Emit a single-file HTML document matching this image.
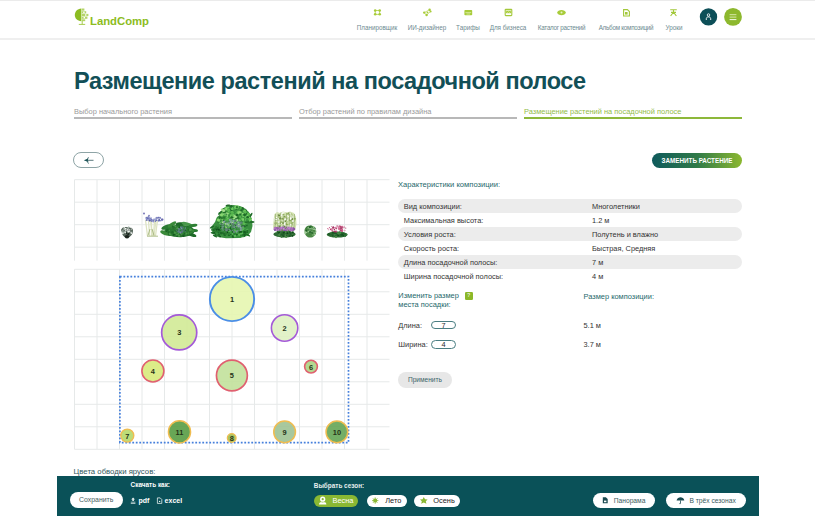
<!DOCTYPE html>
<html><head><meta charset="utf-8">
<style>
*{margin:0;padding:0;box-sizing:border-box}
html,body{width:815px;height:516px;overflow:hidden;background:#fff;font-family:"Liberation Sans",sans-serif;color:#333}
.abs{position:absolute}
#topline{left:0;top:0;width:815px;height:1.4px;background:#ebebeb}
#hdrline{left:0;top:38px;width:815px;height:1.5px;background:#efefef}
.nav{position:absolute;top:23.5px;font-size:6.3px;color:#6d8a90;white-space:nowrap;text-align:center}
.navi{position:absolute;top:8px}
#title{left:74px;top:67.9px;font-size:23.5px;line-height:normal;font-weight:bold;color:#124f57;white-space:nowrap;letter-spacing:-0.44px}
.tab{position:absolute;top:106.6px;font-size:7.45px;color:#9a9a9a;white-space:nowrap}
.tabl{position:absolute;top:117px;height:1.8px;background:#b8b8b8}
.row{position:absolute;left:398px;width:344px;height:14px;border-radius:7px;font-size:7.4px;color:#333}
.row.g{background:#ececec}
.row span{position:absolute;top:3.4px}
.row span.a{left:5.8px}
.row span.b{left:194px}
.lbl{position:absolute;font-size:8px;color:#1e686b;white-space:nowrap}
.txt{position:absolute;font-size:7.4px;color:#333;white-space:nowrap}
.bw{position:absolute;color:#fff;font-size:6.4px;font-weight:bold;white-space:nowrap}
.pill{height:12.4px;border-radius:6.2px;font-size:7.4px;line-height:12.6px;white-space:nowrap}
.btn2{height:15.4px;border-radius:7.7px;background:#fff;color:#3a5a60;font-size:6.7px;line-height:15.6px;white-space:nowrap}
</style></head><body>
<div id="topline" class="abs"></div>
<div id="hdrline" class="abs"></div>

<!-- logo -->
<svg class="abs" style="left:0;top:0" width="160" height="30">
  <path d="M81.4 8.4 C77.3 8.6 74.8 11.6 74.8 15 C74.8 18.4 77.3 21 81.4 21.2 Z" fill="#8cbc22"/>
  <g fill="#b4d468">
    <rect x="81.8" y="8.5" width="2.6" height="2.2"/>
    <rect x="81.8" y="11.2" width="4.4" height="2.2"/>
    <rect x="81.8" y="13.9" width="6.6" height="2.2"/>
    <rect x="81.8" y="16.6" width="5.6" height="2.2"/>
    <rect x="81.8" y="19.3" width="3.4" height="1.9"/>
  </g>
  <g fill="#fff">
    <rect x="83.2" y="11.6" width="1.4" height="1.4"/><rect x="85" y="14.3" width="1.4" height="1.4"/><rect x="83.6" y="17" width="1.4" height="1.4"/>
  </g>
  <path d="M82.2 21 V24.4 M78.8 24.4 H85.2" stroke="#a8cc50" stroke-width="1"/>
  <text x="90" y="24.7" font-family="Liberation Sans" font-weight="bold" font-size="11.3" fill="#8cbc22">LandComp</text>
</svg>

<!-- nav -->
<div class="nav" style="left:337px;width:80px">Планировщик</div>
<div class="nav" style="left:387px;width:80px">ИИ-дизайнер</div>
<div class="nav" style="left:428px;width:80px">Тарифы</div>
<div class="nav" style="left:468px;width:80px">Для бизнеса</div>
<div class="nav" style="left:521.5px;width:80px;letter-spacing:-0.27px">Каталог растений</div>
<div class="nav" style="left:586px;width:80px;letter-spacing:-0.25px">Альбом композиций</div>
<div class="nav" style="left:634px;width:80px">Уроки</div>
<svg class="abs" style="left:0;top:0" width="815" height="38">
 <g fill="none" stroke="#b0d048" stroke-width="0.8">
  <rect x="375.2" y="10.5" width="4.5" height="3.8"/>
 </g>
 <g fill="#a8cc3a">
  <circle cx="375.2" cy="10.5" r="1.3"/><circle cx="379.7" cy="10.5" r="1.3"/><circle cx="375.2" cy="14.3" r="1.3"/><circle cx="379.7" cy="14.3" r="1.3"/>
 </g>
 <g fill="none" stroke="#b8d458" stroke-width="0.7">
  <path d="M429.5 9.8 L424.2 12.6 L426.6 15 L430.6 11.4 Z"/>
 </g>
 <g fill="#a8cc3a">
  <circle cx="429.6" cy="9.8" r="1.2"/><circle cx="424.2" cy="12.6" r="1.2"/><circle cx="426.6" cy="15" r="1.2"/><circle cx="430.6" cy="11.6" r="1"/><circle cx="427.5" cy="12.4" r="0.9"/>
 </g>
 <g fill="none" stroke="#a3c83a" stroke-width="1.1">
  <rect x="505.2" y="9.4" width="6.6" height="6.2" rx="0.6"/>
  <path d="M623.6 9.6 H627.4 L629.4 11.6 V16 H623.6 Z"/>
  <path d="M670.2 9.8 H676.8 M673.5 9.8 V12.2 M670.6 16 L673.5 12.2 L676.4 16 M671 12.4 H676"/>
 </g>
 <rect x="464.4" y="10" width="7.8" height="5.2" rx="0.8" fill="#a8cc3a"/>
 <path d="M465.4 12.6 H471.2 M466.5 14 H470" stroke="#e4f0b8" stroke-width="0.7"/>
 <rect x="505.8" y="10.6" width="5.4" height="2.6" fill="#a8cc3a"/><path d="M506.6 11.6 L507.4 12.6 L508.5 11.6 L509.6 12.6 L510.4 11.6" stroke="#e8f2c8" stroke-width="0.5" fill="none"/>
 <path d="M557.2 12.6 C557.6 9.1 565.4 9.1 565.8 12.6 C565.4 16.1 557.6 16.1 557.2 12.6 Z" fill="#a8cc3a"/><circle cx="561.5" cy="12.6" r="1" fill="#e8f2c8"/>
 <g fill="#a3c83a"><circle cx="0" cy="0" r="0"/><rect x="625" y="12" width="2.6" height="2.6"/></g>
 <circle cx="708.5" cy="16.9" r="8.7" fill="#0d4f58"/>
 <path d="M706.3 20 V18.7 C706.3 17.4 707.3 16.9 708.5 16.9 C709.7 16.9 710.7 17.4 710.7 18.7 V20" fill="none" stroke="#fff" stroke-width="0.9"/><circle cx="708.5" cy="15" r="1.25" fill="none" stroke="#fff" stroke-width="0.8"/>
 <circle cx="733" cy="16.9" r="8.9" fill="#8db82e"/>
 <path d="M729.6 14.7 H736.4 M729.6 17.1 H736.4" stroke="#dfeeb8" stroke-width="0.9"/><path d="M729.6 19.6 H736.4" stroke="#fff" stroke-width="0.9"/>
</svg>

<div id="title" class="abs">Размещение растений на посадочной полосе</div>

<div class="tab" style="left:74px">Выбор начального растения</div>
<div class="tabl" style="left:74px;width:218px"></div>
<div class="tab" style="left:299px">Отбор растений по правилам дизайна</div>
<div class="tabl" style="left:299px;width:218px"></div>
<div class="tab" style="left:524px;color:#92bb48">Размещение растений на посадочной полосе</div>
<div class="tabl" style="left:524px;width:218px;background:#8db83a"></div>

<!-- back button -->
<div class="abs" style="left:73.3px;top:152.3px;width:31.2px;height:16.2px;border:0.8px solid #8ea4a6;border-radius:8px"></div>
<svg class="abs" style="left:0;top:0" width="120" height="175"><path d="M86 160.3 H93.5" stroke="#4a6a6e" stroke-width="0.9"/><path d="M83.8 160.3 L88.5 158.6 L87.6 160.3 L88.5 162 Z" fill="#0d4a4e"/><path d="M88.5 157.2 L86.6 160.3 L88.5 163.6" stroke="#2a5a5e" stroke-width="0.8" fill="none"/></svg>

<!-- replace button -->
<div class="abs" style="left:652px;top:153px;width:90px;height:15px;border-radius:8px;background:linear-gradient(90deg,#0f5a5c,#2f7a48 50%,#8cb830);color:#fff;font-size:6.3px;font-weight:bold;text-align:center;line-height:15.4px">ЗАМЕНИТЬ РАСТЕНИЕ</div>

<!-- grids -->
<svg class="abs" style="left:0;top:0" width="815" height="516" id="grids"><line x1="74.5" y1="179.7" x2="74.5" y2="260.7" stroke="#e6e9e9" stroke-width="1"/>
<line x1="97.0" y1="179.7" x2="97.0" y2="260.7" stroke="#e6e9e9" stroke-width="1"/>
<line x1="119.5" y1="179.7" x2="119.5" y2="260.7" stroke="#e6e9e9" stroke-width="1"/>
<line x1="142.0" y1="179.7" x2="142.0" y2="260.7" stroke="#e6e9e9" stroke-width="1"/>
<line x1="164.5" y1="179.7" x2="164.5" y2="260.7" stroke="#e6e9e9" stroke-width="1"/>
<line x1="187.0" y1="179.7" x2="187.0" y2="260.7" stroke="#e6e9e9" stroke-width="1"/>
<line x1="209.5" y1="179.7" x2="209.5" y2="260.7" stroke="#e6e9e9" stroke-width="1"/>
<line x1="232.0" y1="179.7" x2="232.0" y2="260.7" stroke="#e6e9e9" stroke-width="1"/>
<line x1="254.5" y1="179.7" x2="254.5" y2="260.7" stroke="#e6e9e9" stroke-width="1"/>
<line x1="277.0" y1="179.7" x2="277.0" y2="260.7" stroke="#e6e9e9" stroke-width="1"/>
<line x1="299.5" y1="179.7" x2="299.5" y2="260.7" stroke="#e6e9e9" stroke-width="1"/>
<line x1="322.0" y1="179.7" x2="322.0" y2="260.7" stroke="#e6e9e9" stroke-width="1"/>
<line x1="344.5" y1="179.7" x2="344.5" y2="260.7" stroke="#e6e9e9" stroke-width="1"/>
<line x1="367.0" y1="179.7" x2="367.0" y2="260.7" stroke="#e6e9e9" stroke-width="1"/>
<line x1="74.5" y1="179.7" x2="389.5" y2="179.7" stroke="#e6e9e9" stroke-width="1"/>
<line x1="74.5" y1="202.2" x2="389.5" y2="202.2" stroke="#e6e9e9" stroke-width="1"/>
<line x1="74.5" y1="224.7" x2="389.5" y2="224.7" stroke="#e6e9e9" stroke-width="1"/>
<line x1="74.5" y1="247.2" x2="389.5" y2="247.2" stroke="#e6e9e9" stroke-width="1"/>
<line x1="74.5" y1="269.3" x2="74.5" y2="449.3" stroke="#e6e9e9" stroke-width="1"/>
<line x1="97.0" y1="269.3" x2="97.0" y2="449.3" stroke="#e6e9e9" stroke-width="1"/>
<line x1="119.5" y1="269.3" x2="119.5" y2="449.3" stroke="#e6e9e9" stroke-width="1"/>
<line x1="142.0" y1="269.3" x2="142.0" y2="449.3" stroke="#e6e9e9" stroke-width="1"/>
<line x1="164.5" y1="269.3" x2="164.5" y2="449.3" stroke="#e6e9e9" stroke-width="1"/>
<line x1="187.0" y1="269.3" x2="187.0" y2="449.3" stroke="#e6e9e9" stroke-width="1"/>
<line x1="209.5" y1="269.3" x2="209.5" y2="449.3" stroke="#e6e9e9" stroke-width="1"/>
<line x1="232.0" y1="269.3" x2="232.0" y2="449.3" stroke="#e6e9e9" stroke-width="1"/>
<line x1="254.5" y1="269.3" x2="254.5" y2="449.3" stroke="#e6e9e9" stroke-width="1"/>
<line x1="277.0" y1="269.3" x2="277.0" y2="449.3" stroke="#e6e9e9" stroke-width="1"/>
<line x1="299.5" y1="269.3" x2="299.5" y2="449.3" stroke="#e6e9e9" stroke-width="1"/>
<line x1="322.0" y1="269.3" x2="322.0" y2="449.3" stroke="#e6e9e9" stroke-width="1"/>
<line x1="344.5" y1="269.3" x2="344.5" y2="449.3" stroke="#e6e9e9" stroke-width="1"/>
<line x1="367.0" y1="269.3" x2="367.0" y2="449.3" stroke="#e6e9e9" stroke-width="1"/>
<line x1="74.5" y1="269.3" x2="389.5" y2="269.3" stroke="#e6e9e9" stroke-width="1"/>
<line x1="74.5" y1="291.8" x2="389.5" y2="291.8" stroke="#e6e9e9" stroke-width="1"/>
<line x1="74.5" y1="314.3" x2="389.5" y2="314.3" stroke="#e6e9e9" stroke-width="1"/>
<line x1="74.5" y1="336.8" x2="389.5" y2="336.8" stroke="#e6e9e9" stroke-width="1"/>
<line x1="74.5" y1="359.3" x2="389.5" y2="359.3" stroke="#e6e9e9" stroke-width="1"/>
<line x1="74.5" y1="381.8" x2="389.5" y2="381.8" stroke="#e6e9e9" stroke-width="1"/>
<line x1="74.5" y1="404.3" x2="389.5" y2="404.3" stroke="#e6e9e9" stroke-width="1"/>
<line x1="74.5" y1="426.8" x2="389.5" y2="426.8" stroke="#e6e9e9" stroke-width="1"/>
<line x1="74.5" y1="449.3" x2="389.5" y2="449.3" stroke="#e6e9e9" stroke-width="1"/>
<rect x="119.9" y="276.6" width="228.6" height="166" fill="none" stroke="#4680dc" stroke-width="1.7" stroke-dasharray="1.8 1.7"/>
<circle cx="232.0" cy="299.0" r="22.150000000000002" fill="#e5f6ae" fill-opacity="0.88" stroke="#4a8ee6" stroke-width="1.9"/>
<text x="232.0" y="301.9" text-anchor="middle" font-family="Liberation Sans" font-weight="bold" font-size="7.4" fill="#263318">1</text>
<circle cx="179.2" cy="332.4" r="17.549999999999997" fill="#d0e993" fill-opacity="0.88" stroke="#a45ad8" stroke-width="1.7"/>
<text x="179.2" y="335.29999999999995" text-anchor="middle" font-family="Liberation Sans" font-weight="bold" font-size="7.4" fill="#263318">3</text>
<circle cx="284.6" cy="328.0" r="13.2" fill="#def0c0" fill-opacity="0.88" stroke="#a45ad8" stroke-width="1.6"/>
<text x="284.6" y="330.9" text-anchor="middle" font-family="Liberation Sans" font-weight="bold" font-size="7.4" fill="#263318">2</text>
<circle cx="152.9" cy="371.0" r="11.0" fill="#d7e978" fill-opacity="0.88" stroke="#e06070" stroke-width="1.6"/>
<text x="152.9" y="373.9" text-anchor="middle" font-family="Liberation Sans" font-weight="bold" font-size="7.4" fill="#263318">4</text>
<circle cx="231.9" cy="375.5" r="15.450000000000001" fill="#c0e098" fill-opacity="0.88" stroke="#e06070" stroke-width="1.7"/>
<text x="231.9" y="378.4" text-anchor="middle" font-family="Liberation Sans" font-weight="bold" font-size="7.4" fill="#263318">5</text>
<circle cx="311.0" cy="366.6" r="6.4" fill="#aad381" fill-opacity="0.88" stroke="#e06070" stroke-width="1.6"/>
<text x="311.0" y="369.5" text-anchor="middle" font-family="Liberation Sans" font-weight="bold" font-size="7.4" fill="#263318">6</text>
<circle cx="127.3" cy="435.6" r="6.5" fill="#b3d766" fill-opacity="0.88" stroke="#f0bc50" stroke-width="1.4"/>
<text x="127.3" y="438.5" text-anchor="middle" font-family="Liberation Sans" font-weight="bold" font-size="7.4" fill="#263318">7</text>
<circle cx="179.5" cy="431.9" r="11.05" fill="#539a3f" fill-opacity="0.88" stroke="#f0bc50" stroke-width="1.5"/>
<text x="179.5" y="434.79999999999995" text-anchor="middle" font-family="Liberation Sans" font-weight="bold" font-size="7.4" fill="#263318">11</text>
<circle cx="231.7" cy="438.0" r="4.35" fill="#9cbc4a" fill-opacity="0.88" stroke="#f0bc50" stroke-width="1.3"/>
<text x="231.7" y="440.9" text-anchor="middle" font-family="Liberation Sans" font-weight="bold" font-size="7.4" fill="#263318">8</text>
<circle cx="284.6" cy="431.9" r="10.85" fill="#9cc091" fill-opacity="0.88" stroke="#f0bc50" stroke-width="1.5"/>
<text x="284.6" y="434.79999999999995" text-anchor="middle" font-family="Liberation Sans" font-weight="bold" font-size="7.4" fill="#263318">9</text>
<circle cx="336.9" cy="431.9" r="10.85" fill="#61a351" fill-opacity="0.88" stroke="#f0bc50" stroke-width="1.5"/>
<text x="336.9" y="434.79999999999995" text-anchor="middle" font-family="Liberation Sans" font-weight="bold" font-size="7.4" fill="#263318">10</text><path d="M121.5 231 C121 227.5 124 226.8 127 227 C130.5 226.8 133.2 228 133 231 C133 234 131 236 129.5 237 L128 238.5 L126 238.5 L124.5 237 C122.5 235.5 121.8 233.5 121.5 231 Z" fill="#56645a"/>
<circle cx="126.1" cy="232.5" r="0.79" fill="#6a7a70"/>
<circle cx="127.7" cy="229.8" r="0.75" fill="#8a9a90"/>
<circle cx="130.5" cy="231.6" r="0.44" fill="#6a7a70"/>
<circle cx="125.8" cy="230.7" r="0.74" fill="#8a9a90"/>
<circle cx="124.2" cy="228.7" r="0.44" fill="#b0bcb4"/>
<circle cx="129.4" cy="231.6" r="0.73" fill="#d8e0d8"/>
<circle cx="126.5" cy="232.5" r="0.47" fill="#2a3a30"/>
<circle cx="122.9" cy="229.7" r="0.46" fill="#8a9a90"/>
<circle cx="124.2" cy="233.2" r="0.44" fill="#1e2a22"/>
<circle cx="124.2" cy="229.0" r="0.72" fill="#f0f4f0"/>
<circle cx="121.9" cy="231.9" r="0.62" fill="#8a9a90"/>
<circle cx="128.2" cy="227.6" r="0.55" fill="#2a3a30"/>
<circle cx="122.0" cy="230.4" r="0.84" fill="#2a3a30"/>
<circle cx="125.9" cy="230.3" r="0.71" fill="#d8e0d8"/>
<circle cx="127.1" cy="229.4" r="0.69" fill="#1e2a22"/>
<circle cx="128.5" cy="230.7" r="0.73" fill="#f0f4f0"/>
<circle cx="125.3" cy="233.1" r="0.70" fill="#f8faf8"/>
<circle cx="128.5" cy="231.5" r="0.56" fill="#6a7a70"/>
<circle cx="131.2" cy="232.3" r="0.79" fill="#f8faf8"/>
<circle cx="126.3" cy="233.5" r="0.80" fill="#1e2a22"/>
<circle cx="130.0" cy="230.1" r="0.77" fill="#f8faf8"/>
<circle cx="131.4" cy="232.3" r="0.48" fill="#8a9a90"/>
<circle cx="122.9" cy="233.4" r="0.70" fill="#d8e0d8"/>
<circle cx="123.2" cy="232.0" r="0.93" fill="#b0bcb4"/>
<circle cx="128.9" cy="229.3" r="0.65" fill="#f0f4f0"/>
<circle cx="125.6" cy="228.6" r="0.54" fill="#6a7a70"/>
<circle cx="128.2" cy="232.8" r="0.54" fill="#f8faf8"/>
<circle cx="128.1" cy="229.4" r="0.57" fill="#d8e0d8"/>
<circle cx="124.1" cy="232.2" r="0.74" fill="#d8e0d8"/>
<circle cx="125.6" cy="228.2" r="0.77" fill="#1e2a22"/>
<circle cx="122.1" cy="232.1" r="0.97" fill="#b0bcb4"/>
<circle cx="124.3" cy="232.6" r="0.69" fill="#b0bcb4"/>
<circle cx="128.3" cy="231.4" r="0.53" fill="#d8e0d8"/>
<circle cx="130.2" cy="233.1" r="0.46" fill="#d8e0d8"/>
<circle cx="121.9" cy="230.1" r="0.77" fill="#6a7a70"/>
<circle cx="130.0" cy="228.7" r="0.49" fill="#2a3a30"/>
<circle cx="131.0" cy="230.1" r="0.68" fill="#6a7a70"/>
<circle cx="130.1" cy="227.6" r="0.68" fill="#f8faf8"/>
<circle cx="126.2" cy="232.5" r="0.85" fill="#2a3a30"/>
<circle cx="122.5" cy="231.5" r="0.71" fill="#8a9a90"/>
<circle cx="130.7" cy="230.1" r="0.49" fill="#1e2a22"/>
<circle cx="127.2" cy="228.7" r="0.79" fill="#6a7a70"/>
<circle cx="126.1" cy="229.0" r="0.62" fill="#d8e0d8"/>
<circle cx="125.4" cy="232.6" r="0.72" fill="#f0f4f0"/>
<circle cx="124.2" cy="228.5" r="0.87" fill="#8a9a90"/>
<circle cx="128.7" cy="227.4" r="0.84" fill="#8a9a90"/>
<circle cx="128.2" cy="233.8" r="0.84" fill="#1e2a22"/>
<circle cx="127.9" cy="228.2" r="0.52" fill="#f0f4f0"/>
<circle cx="122.1" cy="232.3" r="0.99" fill="#f0f4f0"/>
<circle cx="128.5" cy="231.7" r="0.68" fill="#f0f4f0"/>
<circle cx="128.2" cy="234.2" r="0.94" fill="#1e2a22"/>
<circle cx="122.7" cy="231.4" r="0.88" fill="#6a7a70"/>
<circle cx="127.9" cy="229.7" r="0.63" fill="#8a9a90"/>
<circle cx="124.7" cy="231.2" r="0.87" fill="#f0f4f0"/>
<circle cx="131.5" cy="233.1" r="0.83" fill="#f8faf8"/>
<circle cx="122.7" cy="233.4" r="0.83" fill="#d8e0d8"/>
<circle cx="127.9" cy="231.0" r="0.75" fill="#f8faf8"/>
<circle cx="127.7" cy="229.5" r="0.90" fill="#f8faf8"/>
<circle cx="125.2" cy="228.9" r="0.73" fill="#d8e0d8"/>
<circle cx="131.8" cy="231.5" r="0.84" fill="#6a7a70"/>
<circle cx="121.9" cy="230.3" r="0.66" fill="#8a9a90"/>
<circle cx="128.1" cy="229.3" r="0.55" fill="#2a3a30"/>
<circle cx="122.3" cy="231.0" r="0.60" fill="#b0bcb4"/>
<circle cx="127.7" cy="230.1" r="0.84" fill="#f8faf8"/>
<circle cx="124.5" cy="227.8" r="0.71" fill="#d8e0d8"/>
<circle cx="123.2" cy="230.4" r="0.41" fill="#f8faf8"/>
<circle cx="127.7" cy="227.8" r="0.87" fill="#d8e0d8"/>
<circle cx="128.7" cy="233.6" r="0.84" fill="#1e2a22"/>
<circle cx="125.2" cy="233.7" r="0.73" fill="#6a7a70"/>
<circle cx="128.0" cy="230.3" r="0.51" fill="#1e2a22"/>
<circle cx="127.5" cy="228.0" r="0.74" fill="#6a7a70"/>
<circle cx="123.0" cy="232.1" r="0.70" fill="#8a9a90"/>
<circle cx="125.7" cy="228.4" r="0.72" fill="#f8faf8"/>
<circle cx="124.3" cy="230.9" r="0.71" fill="#2a3a30"/>
<circle cx="131.5" cy="229.1" r="0.52" fill="#f8faf8"/>
<ellipse cx="127" cy="236.6" rx="2.2" ry="1.5" fill="#1a221c"/>
<path d="M147.5 236 L145.5 220" stroke="#dde3c2" stroke-width="1.3"/>
<path d="M149.5 236 L148.5 220" stroke="#dde3c2" stroke-width="1.3"/>
<path d="M151.5 236 L151.5 220" stroke="#dde3c2" stroke-width="1.3"/>
<path d="M153.5 236 L154.5 220" stroke="#dde3c2" stroke-width="1.3"/>
<path d="M155.5 236 L157.5 220" stroke="#dde3c2" stroke-width="1.3"/>
<path d="M152.5 236 L150.5 220" stroke="#dde3c2" stroke-width="1.3"/>
<path d="M154 236 L156 220" stroke="#dde3c2" stroke-width="1.3"/>
<path d="M148 235.5 L150 229 M154 235.5 L152 229" stroke="#9aae70" stroke-width="0.8"/>
<path d="M147 236.2 H158" stroke="#a8b880" stroke-width="0.9"/>
<circle cx="148.4" cy="219.4" r="0.82" fill="#6a70b8"/>
<circle cx="146.3" cy="217.5" r="0.71" fill="#5a60a0"/>
<circle cx="148.3" cy="216.8" r="0.68" fill="#5a60a0"/>
<circle cx="149.8" cy="220.4" r="1.08" fill="#8a90c8"/>
<circle cx="147.5" cy="218.1" r="1.04" fill="#8a90c8"/>
<circle cx="151.1" cy="218.7" r="0.68" fill="#b0b4d8"/>
<circle cx="150.0" cy="218.7" r="0.81" fill="#5a60a0"/>
<circle cx="146.1" cy="220.5" r="0.61" fill="#b0b4d8"/>
<circle cx="147.0" cy="218.9" r="0.77" fill="#5a60a0"/>
<circle cx="146.5" cy="218.8" r="1.09" fill="#8a90c8"/>
<circle cx="148.8" cy="218.7" r="0.73" fill="#6a70b8"/>
<circle cx="148.9" cy="218.3" r="0.98" fill="#b0b4d8"/>
<circle cx="149.4" cy="217.3" r="1.07" fill="#b0b4d8"/>
<circle cx="149.8" cy="220.5" r="0.89" fill="#5a60a0"/>
<circle cx="148.3" cy="219.1" r="0.94" fill="#b0b4d8"/>
<circle cx="149.1" cy="218.1" r="0.61" fill="#6a70b8"/>
<circle cx="147.9" cy="218.2" r="1.03" fill="#6a70b8"/>
<circle cx="147.4" cy="219.6" r="0.61" fill="#b0b4d8"/>
<circle cx="149.4" cy="218.3" r="0.66" fill="#8a90c8"/>
<circle cx="151.1" cy="218.0" r="0.73" fill="#8a90c8"/>
<circle cx="148.2" cy="220.0" r="0.75" fill="#8a90c8"/>
<circle cx="146.8" cy="220.3" r="0.69" fill="#5a60a0"/>
<circle cx="160.0" cy="217.4" r="0.62" fill="#6a70b8"/>
<circle cx="158.1" cy="217.9" r="0.69" fill="#b0b4d8"/>
<circle cx="158.6" cy="221.0" r="0.93" fill="#b0b4d8"/>
<circle cx="156.7" cy="218.1" r="1.04" fill="#5a60a0"/>
<circle cx="156.8" cy="217.5" r="0.77" fill="#8a90c8"/>
<circle cx="156.3" cy="220.2" r="0.63" fill="#8a90c8"/>
<circle cx="162.0" cy="219.7" r="1.04" fill="#b0b4d8"/>
<circle cx="159.2" cy="220.0" r="1.02" fill="#5a60a0"/>
<circle cx="155.5" cy="218.4" r="0.62" fill="#8a90c8"/>
<circle cx="160.1" cy="220.7" r="0.73" fill="#5a60a0"/>
<circle cx="161.8" cy="219.2" r="0.72" fill="#5a60a0"/>
<circle cx="158.9" cy="220.4" r="0.77" fill="#6a70b8"/>
<circle cx="155.3" cy="219.7" r="0.70" fill="#6a70b8"/>
<circle cx="161.9" cy="220.6" r="0.67" fill="#6a70b8"/>
<circle cx="156.6" cy="220.2" r="0.91" fill="#6a70b8"/>
<circle cx="155.7" cy="218.7" r="0.98" fill="#b0b4d8"/>
<circle cx="158.8" cy="217.6" r="0.85" fill="#5a60a0"/>
<circle cx="157.9" cy="217.8" r="0.62" fill="#b0b4d8"/>
<circle cx="158.1" cy="217.5" r="0.67" fill="#6a70b8"/>
<circle cx="160.1" cy="218.0" r="1.05" fill="#8a90c8"/>
<circle cx="153.5" cy="220.7" r="0.85" fill="#6a70b8"/>
<circle cx="151.6" cy="221.2" r="0.62" fill="#6a70b8"/>
<circle cx="151.3" cy="219.6" r="0.80" fill="#6a70b8"/>
<circle cx="152.2" cy="220.6" r="0.97" fill="#6a70b8"/>
<circle cx="152.6" cy="220.2" r="0.89" fill="#8a90c8"/>
<circle cx="154.0" cy="219.2" r="0.69" fill="#6a70b8"/>
<circle cx="153.3" cy="221.7" r="0.78" fill="#8a90c8"/>
<circle cx="155.5" cy="221.2" r="0.71" fill="#6a70b8"/>
<circle cx="144" cy="213.5" r="0.9" fill="#6a68b0"/><circle cx="162.5" cy="219.5" r="1" fill="#6a68b0"/><circle cx="149" cy="215.5" r="0.8" fill="#6a68b0"/>
<ellipse cx="179.5" cy="231" rx="15" ry="6.2" fill="#2a7a32"/>
<ellipse cx="166" cy="227" rx="5" ry="1.8" fill="#2a7a32" transform="rotate(-25 166 227)"/>
<ellipse cx="172" cy="224.5" rx="5" ry="1.7" fill="#3a8a3a" transform="rotate(-35 172 224.5)"/>
<ellipse cx="180" cy="224" rx="4.5" ry="1.8" fill="#1e6a28" transform="rotate(-5 180 224)"/>
<ellipse cx="187" cy="224.2" rx="5.5" ry="1.8" fill="#48984a" transform="rotate(15 187 224.2)"/>
<ellipse cx="193" cy="225.5" rx="4.5" ry="1.6" fill="#2e8034" transform="rotate(-10 193 225.5)"/>
<ellipse cx="194.5" cy="230.5" rx="3.5" ry="1.5" fill="#2a7a32" transform="rotate(5 194.5 230.5)"/>
<ellipse cx="165" cy="233" rx="5" ry="2" fill="#3a8a3a" transform="rotate(20 165 233)"/>
<ellipse cx="192" cy="235" rx="4.5" ry="1.6" fill="#1e6a28" transform="rotate(15 192 235)"/>
<circle cx="171.2" cy="228.0" r="0.66" fill="#3a8a3a"/>
<circle cx="173.9" cy="234.9" r="1.15" fill="#155a20"/>
<circle cx="178.1" cy="230.7" r="0.65" fill="#2a7030"/>
<circle cx="183.9" cy="230.7" r="0.77" fill="#4a9a48"/>
<circle cx="176.9" cy="234.8" r="0.97" fill="#4a9a48"/>
<circle cx="181.0" cy="225.6" r="1.04" fill="#2a7030"/>
<circle cx="192.9" cy="230.3" r="0.61" fill="#4a9a48"/>
<circle cx="188.3" cy="232.8" r="1.40" fill="#2a7030"/>
<circle cx="169.3" cy="234.4" r="1.34" fill="#1f6a28"/>
<circle cx="174.9" cy="230.0" r="1.02" fill="#2a7030"/>
<circle cx="188.0" cy="234.7" r="1.01" fill="#1f6a28"/>
<circle cx="177.6" cy="228.5" r="1.32" fill="#4a9a48"/>
<circle cx="175.1" cy="232.4" r="1.36" fill="#4a9a48"/>
<circle cx="169.6" cy="233.6" r="0.93" fill="#4a9a48"/>
<circle cx="174.3" cy="235.6" r="0.60" fill="#2a7030"/>
<circle cx="182.1" cy="229.4" r="1.34" fill="#1f6a28"/>
<circle cx="185.6" cy="229.3" r="0.90" fill="#4a9a48"/>
<circle cx="169.4" cy="234.3" r="0.66" fill="#4a9a48"/>
<circle cx="180.0" cy="225.9" r="0.82" fill="#1f6a28"/>
<circle cx="183.3" cy="228.5" r="1.35" fill="#3a8a3a"/>
<circle cx="188.6" cy="230.3" r="0.85" fill="#2a7030"/>
<circle cx="181.5" cy="227.5" r="0.62" fill="#4a9a48"/>
<circle cx="191.1" cy="228.2" r="1.04" fill="#1f6a28"/>
<circle cx="190.9" cy="232.4" r="0.96" fill="#3a8a3a"/>
<circle cx="174.9" cy="228.7" r="0.64" fill="#155a20"/>
<circle cx="186.2" cy="233.7" r="0.87" fill="#2a7030"/>
<circle cx="179.1" cy="235.7" r="1.12" fill="#4a9a48"/>
<circle cx="175.2" cy="228.5" r="1.05" fill="#4a9a48"/>
<circle cx="187.7" cy="234.0" r="0.66" fill="#155a20"/>
<circle cx="187.7" cy="228.8" r="0.78" fill="#2a7030"/>
<circle cx="188.9" cy="230.9" r="0.71" fill="#3a8a3a"/>
<circle cx="179.7" cy="233.3" r="1.04" fill="#2a7030"/>
<circle cx="180.0" cy="233.8" r="1.06" fill="#1f6a28"/>
<circle cx="179.5" cy="227.5" r="0.93" fill="#155a20"/>
<circle cx="181.3" cy="233.8" r="1.20" fill="#4a9a48"/>
<circle cx="177.1" cy="236.3" r="0.70" fill="#155a20"/>
<circle cx="167.3" cy="230.1" r="1.28" fill="#1f6a28"/>
<circle cx="178.6" cy="233.7" r="0.92" fill="#4a9a48"/>
<circle cx="172.4" cy="232.3" r="1.25" fill="#1f6a28"/>
<circle cx="185.9" cy="233.6" r="1.21" fill="#4a9a48"/>
<circle cx="189.1" cy="230.2" r="0.66" fill="#155a20"/>
<circle cx="188.0" cy="226.7" r="0.80" fill="#1f6a28"/>
<circle cx="180.4" cy="233.1" r="1.38" fill="#1f6a28"/>
<circle cx="190.6" cy="229.3" r="1.12" fill="#4a9a48"/>
<circle cx="190.1" cy="233.5" r="0.60" fill="#3a8a3a"/>
<circle cx="181.0" cy="236.2" r="1.12" fill="#2a7030"/>
<circle cx="190.3" cy="230.0" r="1.02" fill="#4a9a48"/>
<circle cx="178.0" cy="229.3" r="0.66" fill="#155a20"/>
<circle cx="185.2" cy="230.2" r="0.81" fill="#155a20"/>
<circle cx="189.8" cy="231.0" r="1.40" fill="#2a7030"/>
<circle cx="190.4" cy="229.9" r="1.31" fill="#4a9a48"/>
<circle cx="169.3" cy="230.3" r="0.62" fill="#4a9a48"/>
<circle cx="177.3" cy="228.1" r="0.62" fill="#4a9a48"/>
<circle cx="187.9" cy="228.1" r="0.66" fill="#3a8a3a"/>
<circle cx="172.8" cy="226.4" r="0.78" fill="#1f6a28"/>
<circle cx="175.5" cy="226.6" r="0.89" fill="#4a9a48"/>
<circle cx="183.5" cy="235.7" r="1.19" fill="#155a20"/>
<circle cx="188.5" cy="232.6" r="0.76" fill="#3a8a3a"/>
<circle cx="180.3" cy="233.6" r="1.21" fill="#2a7030"/>
<circle cx="188.1" cy="233.7" r="1.09" fill="#3a8a3a"/>
<circle cx="166.2" cy="231.5" r="0.65" fill="#155a20"/>
<circle cx="184.8" cy="233.7" r="0.77" fill="#155a20"/>
<circle cx="181.5" cy="232.0" r="0.65" fill="#4a9a48"/>
<circle cx="168.3" cy="232.4" r="0.85" fill="#1f6a28"/>
<circle cx="193.0" cy="230.9" r="0.86" fill="#3a8a3a"/>
<circle cx="173.7" cy="227.7" r="0.97" fill="#2a7030"/>
<circle cx="175.1" cy="228.1" r="0.90" fill="#2a7030"/>
<circle cx="175.2" cy="231.6" r="0.66" fill="#1f6a28"/>
<circle cx="171.4" cy="235.3" r="0.70" fill="#3a8a3a"/>
<circle cx="170.5" cy="234.3" r="0.85" fill="#4a9a48"/>
<circle cx="185.3" cy="231.3" r="0.62" fill="#4a6a70"/>
<circle cx="182.3" cy="231.7" r="1.04" fill="#6a8a98"/>
<circle cx="179.0" cy="228.9" r="0.88" fill="#4a6a70"/>
<circle cx="182.1" cy="230.1" r="0.54" fill="#6a8a98"/>
<circle cx="180.8" cy="232.6" r="1.04" fill="#7a98a0"/>
<circle cx="178.7" cy="231.3" r="1.07" fill="#6a8a98"/>
<circle cx="180.6" cy="232.5" r="0.69" fill="#7a98a0"/>
<circle cx="179.5" cy="232.4" r="0.86" fill="#6a8a98"/>
<circle cx="183.9" cy="230.2" r="0.79" fill="#4a6a70"/>
<circle cx="184.6" cy="229.5" r="0.65" fill="#4a6a70"/>
<circle cx="181.9" cy="229.0" r="0.80" fill="#6a8a98"/>
<circle cx="182.7" cy="227.6" r="0.99" fill="#5a7a80"/>
<circle cx="178.3" cy="228.9" r="0.69" fill="#7a98a0"/>
<circle cx="182.0" cy="227.7" r="0.81" fill="#4a6a70"/>
<circle cx="181.1" cy="228.5" r="0.54" fill="#6a8a98"/>
<circle cx="176.6" cy="230.3" r="0.60" fill="#4a6a70"/>
<circle cx="185.4" cy="228.0" r="0.66" fill="#6a8a98"/>
<circle cx="182.0" cy="231.9" r="1.09" fill="#4a6a70"/>
<circle cx="182.0" cy="231.0" r="0.78" fill="#5a7a80"/>
<circle cx="180.9" cy="227.2" r="0.90" fill="#6a8a98"/>
<circle cx="181.6" cy="228.4" r="0.67" fill="#7a98a0"/>
<circle cx="177.4" cy="231.8" r="0.62" fill="#5a7a80"/>
<circle cx="182.1" cy="231.3" r="0.67" fill="#5a7a80"/>
<circle cx="179.3" cy="231.7" r="1.10" fill="#5a7a80"/>
<circle cx="179.9" cy="229.2" r="0.78" fill="#6a8a98"/>
<path d="M212 226 L215 222 L217 217 L221 214 L222 209 L227 206 L233 205 L240 206 L246 209 L250 214 L252 220 L252.5 226 L251 232 L247 236 L240 238 L226 238.2 L218 237 L214 234 L211 230 Z" fill="#3a9040"/>
<circle cx="243.4" cy="224.4" r="1.44" fill="#a8e090"/>
<circle cx="236.9" cy="217.7" r="0.96" fill="#4aa848"/>
<circle cx="246.5" cy="222.1" r="1.45" fill="#3a9040"/>
<circle cx="243.4" cy="215.6" r="1.48" fill="#a8e090"/>
<circle cx="222.1" cy="212.1" r="1.30" fill="#2a7a30"/>
<circle cx="244.3" cy="225.2" r="1.26" fill="#3a9040"/>
<circle cx="243.6" cy="220.8" r="0.74" fill="#6ac860"/>
<circle cx="248.1" cy="221.6" r="1.52" fill="#2a7a30"/>
<circle cx="238.6" cy="211.5" r="1.03" fill="#6ac860"/>
<circle cx="236.7" cy="220.1" r="1.15" fill="#a8e090"/>
<circle cx="239.0" cy="220.6" r="1.06" fill="#5aba50"/>
<circle cx="230.7" cy="216.0" r="0.85" fill="#6ac860"/>
<circle cx="226.4" cy="222.7" r="0.98" fill="#2a7a30"/>
<circle cx="229.1" cy="228.0" r="1.02" fill="#8ad870"/>
<circle cx="248.8" cy="220.3" r="1.42" fill="#3a9040"/>
<circle cx="225.6" cy="224.2" r="1.55" fill="#8ad870"/>
<circle cx="243.0" cy="214.1" r="1.44" fill="#8ad870"/>
<circle cx="224.9" cy="215.3" r="1.40" fill="#5aba50"/>
<circle cx="246.6" cy="219.9" r="1.28" fill="#8ad870"/>
<circle cx="245.4" cy="224.4" r="1.03" fill="#5aba50"/>
<circle cx="239.5" cy="224.5" r="1.17" fill="#4aa848"/>
<circle cx="243.2" cy="224.8" r="1.42" fill="#3a9040"/>
<circle cx="229.0" cy="230.3" r="0.74" fill="#a8e090"/>
<circle cx="228.8" cy="228.3" r="1.27" fill="#4aa848"/>
<circle cx="245.0" cy="213.2" r="1.44" fill="#5aba50"/>
<circle cx="224.0" cy="209.7" r="1.26" fill="#3a9040"/>
<circle cx="237.5" cy="214.1" r="0.90" fill="#8ad870"/>
<circle cx="240.2" cy="217.1" r="1.02" fill="#5aba50"/>
<circle cx="234.3" cy="230.1" r="1.51" fill="#2a7a30"/>
<circle cx="245.6" cy="211.0" r="1.31" fill="#1e6a28"/>
<circle cx="243.7" cy="225.8" r="1.20" fill="#6ac860"/>
<circle cx="228.4" cy="213.2" r="0.92" fill="#8ad870"/>
<circle cx="227.8" cy="211.7" r="1.09" fill="#2a7a30"/>
<circle cx="250.9" cy="219.3" r="1.12" fill="#a8e090"/>
<circle cx="235.3" cy="207.6" r="1.11" fill="#5aba50"/>
<circle cx="238.0" cy="211.4" r="0.76" fill="#1e6a28"/>
<circle cx="229.3" cy="220.7" r="1.10" fill="#2a7a30"/>
<circle cx="239.9" cy="220.2" r="1.53" fill="#1e6a28"/>
<circle cx="236.1" cy="209.8" r="0.75" fill="#8ad870"/>
<circle cx="225.4" cy="209.6" r="0.72" fill="#4aa848"/>
<circle cx="248.5" cy="218.7" r="1.43" fill="#3a9040"/>
<circle cx="244.8" cy="228.0" r="0.96" fill="#5aba50"/>
<circle cx="228.4" cy="208.8" r="0.90" fill="#1e6a28"/>
<circle cx="227.4" cy="214.8" r="0.99" fill="#6ac860"/>
<circle cx="243.5" cy="214.1" r="0.93" fill="#a8e090"/>
<circle cx="236.3" cy="225.4" r="1.16" fill="#1e6a28"/>
<circle cx="228.7" cy="223.2" r="1.06" fill="#6ac860"/>
<circle cx="227.1" cy="207.9" r="0.85" fill="#6ac860"/>
<circle cx="243.3" cy="225.3" r="1.27" fill="#1e6a28"/>
<circle cx="245.2" cy="217.2" r="1.17" fill="#4aa848"/>
<circle cx="233.8" cy="228.5" r="1.47" fill="#1e6a28"/>
<circle cx="232.4" cy="231.9" r="1.22" fill="#1e6a28"/>
<circle cx="231.6" cy="222.2" r="0.91" fill="#2a7a30"/>
<circle cx="230.5" cy="227.9" r="0.98" fill="#1e6a28"/>
<circle cx="232.4" cy="207.8" r="0.90" fill="#6ac860"/>
<circle cx="225.7" cy="213.3" r="1.16" fill="#2a7a30"/>
<circle cx="239.5" cy="223.6" r="1.29" fill="#2a7a30"/>
<circle cx="246.1" cy="222.3" r="0.97" fill="#1e6a28"/>
<circle cx="223.3" cy="217.2" r="0.97" fill="#5aba50"/>
<circle cx="237.8" cy="228.8" r="1.13" fill="#5aba50"/>
<circle cx="249.2" cy="220.0" r="1.34" fill="#a8e090"/>
<circle cx="245.2" cy="224.9" r="1.48" fill="#6ac860"/>
<circle cx="226.9" cy="222.9" r="0.71" fill="#1e6a28"/>
<circle cx="223.3" cy="213.5" r="1.24" fill="#a8e090"/>
<circle cx="234.2" cy="231.4" r="0.74" fill="#2a7a30"/>
<circle cx="227.1" cy="222.5" r="0.75" fill="#4aa848"/>
<circle cx="246.6" cy="219.7" r="1.55" fill="#5aba50"/>
<circle cx="223.5" cy="223.9" r="1.28" fill="#8ad870"/>
<circle cx="236.8" cy="214.0" r="0.98" fill="#6ac860"/>
<circle cx="222.1" cy="209.8" r="1.35" fill="#a8e090"/>
<circle cx="233.7" cy="218.0" r="1.46" fill="#a8e090"/>
<circle cx="246.0" cy="224.1" r="0.86" fill="#4aa848"/>
<circle cx="233.0" cy="229.4" r="0.81" fill="#6ac860"/>
<circle cx="231.9" cy="212.5" r="1.20" fill="#8ad870"/>
<circle cx="227.6" cy="207.6" r="1.57" fill="#6ac860"/>
<circle cx="223.5" cy="209.1" r="0.90" fill="#2a7a30"/>
<circle cx="241.8" cy="229.8" r="1.46" fill="#3a9040"/>
<circle cx="247.8" cy="215.2" r="0.99" fill="#8ad870"/>
<circle cx="230.1" cy="224.6" r="1.52" fill="#a8e090"/>
<circle cx="221.8" cy="220.6" r="0.71" fill="#2a7a30"/>
<circle cx="220.6" cy="223.3" r="1.21" fill="#6ac860"/>
<circle cx="236.6" cy="211.1" r="1.23" fill="#5aba50"/>
<circle cx="235.7" cy="220.7" r="0.80" fill="#5aba50"/>
<circle cx="230.4" cy="223.1" r="0.73" fill="#2a7a30"/>
<circle cx="242.8" cy="227.0" r="0.74" fill="#4aa848"/>
<circle cx="233.6" cy="215.7" r="1.23" fill="#1e6a28"/>
<circle cx="239.2" cy="231.1" r="1.18" fill="#4aa848"/>
<circle cx="244.8" cy="211.2" r="1.34" fill="#8ad870"/>
<circle cx="240.0" cy="222.7" r="0.80" fill="#2a7a30"/>
<circle cx="249.4" cy="215.1" r="1.38" fill="#4aa848"/>
<circle cx="240.1" cy="209.8" r="0.96" fill="#4aa848"/>
<circle cx="244.2" cy="227.6" r="1.28" fill="#6ac860"/>
<circle cx="229.3" cy="226.7" r="0.72" fill="#6ac860"/>
<circle cx="237.4" cy="217.8" r="1.38" fill="#1e6a28"/>
<circle cx="235.6" cy="209.0" r="1.13" fill="#6ac860"/>
<circle cx="231.8" cy="217.5" r="1.07" fill="#8ad870"/>
<circle cx="228.7" cy="218.5" r="1.12" fill="#2a7a30"/>
<circle cx="226.3" cy="217.6" r="1.48" fill="#4aa848"/>
<circle cx="225.9" cy="215.9" r="1.09" fill="#3a9040"/>
<circle cx="230.5" cy="229.9" r="0.75" fill="#1e6a28"/>
<circle cx="222.1" cy="219.5" r="1.42" fill="#5aba50"/>
<circle cx="246.8" cy="216.9" r="1.56" fill="#6ac860"/>
<circle cx="228.0" cy="216.6" r="1.43" fill="#3a9040"/>
<circle cx="228.4" cy="219.0" r="1.27" fill="#4aa848"/>
<circle cx="217.1" cy="219.8" r="1.21" fill="#4aa848"/>
<circle cx="227.0" cy="213.4" r="1.06" fill="#8ad870"/>
<circle cx="245.4" cy="211.9" r="1.08" fill="#2a7a30"/>
<circle cx="227.5" cy="224.2" r="1.09" fill="#5aba50"/>
<circle cx="222.4" cy="227.4" r="0.91" fill="#a8e090"/>
<circle cx="243.2" cy="226.2" r="1.32" fill="#2a7a30"/>
<circle cx="228.4" cy="225.1" r="0.84" fill="#a8e090"/>
<circle cx="226.3" cy="209.5" r="0.85" fill="#a8e090"/>
<circle cx="230.8" cy="212.9" r="0.91" fill="#1e6a28"/>
<circle cx="218.5" cy="221.9" r="0.91" fill="#3a9040"/>
<circle cx="232.4" cy="230.2" r="1.44" fill="#5aba50"/>
<circle cx="231.2" cy="206.3" r="1.35" fill="#1e6a28"/>
<circle cx="239.2" cy="225.3" r="0.87" fill="#4aa848"/>
<circle cx="241.0" cy="228.1" r="0.88" fill="#5aba50"/>
<circle cx="249.1" cy="217.8" r="1.36" fill="#8ad870"/>
<circle cx="233.2" cy="223.2" r="1.52" fill="#6ac860"/>
<circle cx="236.9" cy="226.8" r="0.73" fill="#8ad870"/>
<circle cx="240.8" cy="212.2" r="0.90" fill="#6ac860"/>
<circle cx="227.8" cy="220.1" r="1.24" fill="#8ad870"/>
<circle cx="242.4" cy="219.2" r="1.47" fill="#8ad870"/>
<circle cx="241.9" cy="210.2" r="1.29" fill="#3a9040"/>
<circle cx="228.2" cy="209.6" r="1.11" fill="#1e6a28"/>
<circle cx="233.1" cy="229.9" r="1.51" fill="#3a9040"/>
<circle cx="236.9" cy="208.2" r="1.27" fill="#6ac860"/>
<circle cx="240.9" cy="211.7" r="0.72" fill="#8ad870"/>
<circle cx="220.3" cy="217.8" r="1.49" fill="#1e6a28"/>
<circle cx="235.9" cy="211.0" r="1.14" fill="#4aa848"/>
<circle cx="246.2" cy="221.3" r="0.84" fill="#3a9040"/>
<circle cx="228.6" cy="218.5" r="1.22" fill="#3a9040"/>
<circle cx="231.5" cy="209.9" r="1.28" fill="#1e6a28"/>
<circle cx="223.2" cy="217.9" r="1.55" fill="#3a9040"/>
<circle cx="241.3" cy="218.7" r="1.16" fill="#4aa848"/>
<circle cx="232.3" cy="208.9" r="1.27" fill="#6ac860"/>
<circle cx="232.4" cy="227.1" r="0.71" fill="#8ad870"/>
<circle cx="245.6" cy="213.8" r="1.31" fill="#6ac860"/>
<circle cx="241.2" cy="223.5" r="1.06" fill="#3a9040"/>
<circle cx="250.7" cy="218.5" r="1.12" fill="#5aba50"/>
<circle cx="244.3" cy="227.3" r="1.43" fill="#3a9040"/>
<circle cx="221.5" cy="220.9" r="0.90" fill="#5aba50"/>
<circle cx="225.8" cy="227.3" r="1.44" fill="#8ad870"/>
<circle cx="225.0" cy="220.4" r="1.19" fill="#5aba50"/>
<circle cx="236.2" cy="210.2" r="1.41" fill="#3a9040"/>
<circle cx="232.9" cy="226.9" r="0.93" fill="#8ad870"/>
<circle cx="228.9" cy="210.9" r="1.42" fill="#6ac860"/>
<circle cx="225.4" cy="227.2" r="0.99" fill="#a8e090"/>
<circle cx="221.8" cy="223.5" r="1.29" fill="#1e6a28"/>
<circle cx="239.4" cy="224.9" r="1.05" fill="#4aa848"/>
<circle cx="241.6" cy="208.1" r="1.41" fill="#5aba50"/>
<circle cx="224.2" cy="217.5" r="1.22" fill="#2a7a30"/>
<circle cx="235.1" cy="222.4" r="0.96" fill="#4aa848"/>
<circle cx="220.2" cy="213.3" r="0.87" fill="#a8e090"/>
<circle cx="230.2" cy="223.2" r="1.51" fill="#5aba50"/>
<circle cx="223.1" cy="212.2" r="1.58" fill="#4aa848"/>
<circle cx="226.1" cy="208.3" r="1.41" fill="#6ac860"/>
<circle cx="238.6" cy="229.2" r="1.18" fill="#a8e090"/>
<circle cx="231.2" cy="215.1" r="0.81" fill="#8ad870"/>
<circle cx="234.6" cy="223.8" r="1.14" fill="#2a7a30"/>
<circle cx="217.9" cy="220.2" r="1.33" fill="#3a9040"/>
<circle cx="221.5" cy="219.1" r="1.48" fill="#2a7a30"/>
<circle cx="239.1" cy="225.2" r="1.33" fill="#a8e090"/>
<circle cx="226.1" cy="208.7" r="1.04" fill="#8ad870"/>
<circle cx="248.0" cy="219.0" r="0.86" fill="#1e6a28"/>
<circle cx="232.1" cy="217.3" r="1.25" fill="#1e6a28"/>
<circle cx="235.9" cy="215.3" r="1.14" fill="#5aba50"/>
<circle cx="248.1" cy="221.3" r="1.26" fill="#1e6a28"/>
<circle cx="245.4" cy="224.9" r="1.01" fill="#3a9040"/>
<circle cx="231.9" cy="226.4" r="0.93" fill="#2a7a30"/>
<circle cx="238.3" cy="212.8" r="1.44" fill="#8ad870"/>
<circle cx="225.5" cy="230.2" r="1.49" fill="#1e6a28"/>
<circle cx="247.6" cy="217.4" r="1.41" fill="#1e6a28"/>
<circle cx="239.1" cy="229.3" r="0.81" fill="#4aa848"/>
<circle cx="234.7" cy="216.5" r="1.35" fill="#8ad870"/>
<circle cx="230.4" cy="218.2" r="0.97" fill="#2a7a30"/>
<circle cx="248.8" cy="222.4" r="1.13" fill="#2a7a30"/>
<circle cx="237.9" cy="207.0" r="1.25" fill="#5aba50"/>
<circle cx="224.1" cy="211.2" r="1.24" fill="#4aa848"/>
<circle cx="237.2" cy="229.3" r="1.11" fill="#5aba50"/>
<circle cx="239.8" cy="222.3" r="0.73" fill="#4aa848"/>
<circle cx="245.8" cy="213.6" r="1.03" fill="#5aba50"/>
<circle cx="236.9" cy="209.5" r="0.93" fill="#6ac860"/>
<circle cx="235.3" cy="221.2" r="0.72" fill="#2a7a30"/>
<circle cx="221.7" cy="219.1" r="1.44" fill="#8ad870"/>
<circle cx="219.5" cy="213.3" r="1.10" fill="#2a7a30"/>
<circle cx="228.4" cy="209.9" r="1.59" fill="#5aba50"/>
<circle cx="223.2" cy="220.3" r="0.79" fill="#a8e090"/>
<circle cx="235.6" cy="223.9" r="0.71" fill="#2a7a30"/>
<circle cx="247.9" cy="219.6" r="1.59" fill="#4aa848"/>
<circle cx="235.2" cy="223.4" r="1.13" fill="#6ac860"/>
<circle cx="232.4" cy="212.7" r="1.36" fill="#5aba50"/>
<circle cx="243.1" cy="215.3" r="1.37" fill="#5aba50"/>
<circle cx="233.4" cy="215.3" r="1.27" fill="#a8e090"/>
<circle cx="218.1" cy="222.1" r="0.93" fill="#2a7a30"/>
<circle cx="233.6" cy="217.6" r="0.71" fill="#4aa848"/>
<circle cx="226.7" cy="223.7" r="1.24" fill="#a8e090"/>
<circle cx="226.6" cy="214.4" r="1.55" fill="#a8e090"/>
<circle cx="227.2" cy="220.0" r="1.57" fill="#4aa848"/>
<circle cx="225.1" cy="226.9" r="1.27" fill="#8ad870"/>
<circle cx="219.2" cy="220.7" r="1.11" fill="#6ac860"/>
<circle cx="236.8" cy="209.4" r="0.96" fill="#2a7a30"/>
<circle cx="224.1" cy="211.7" r="1.42" fill="#1e6a28"/>
<circle cx="243.9" cy="210.9" r="0.71" fill="#5aba50"/>
<circle cx="226.4" cy="214.7" r="1.09" fill="#3a9040"/>
<circle cx="223.9" cy="226.5" r="1.24" fill="#3a9040"/>
<circle cx="237.2" cy="212.5" r="0.70" fill="#6ac860"/>
<circle cx="233.2" cy="224.1" r="1.53" fill="#2a7a30"/>
<circle cx="232.5" cy="223.7" r="1.50" fill="#5aba50"/>
<circle cx="231.7" cy="230.9" r="1.43" fill="#a8e090"/>
<circle cx="231.2" cy="222.1" r="1.20" fill="#8ad870"/>
<circle cx="238.5" cy="229.7" r="1.54" fill="#3a9040"/>
<circle cx="232.5" cy="221.9" r="1.06" fill="#3a9040"/>
<circle cx="245.6" cy="214.5" r="0.71" fill="#8ad870"/>
<circle cx="229.1" cy="220.0" r="1.43" fill="#4aa848"/>
<circle cx="235.4" cy="228.8" r="1.51" fill="#1e6a28"/>
<circle cx="221.1" cy="220.5" r="0.87" fill="#3a9040"/>
<circle cx="246.8" cy="225.4" r="0.96" fill="#1e6a28"/>
<circle cx="224.0" cy="224.4" r="0.83" fill="#2a7a30"/>
<circle cx="244.6" cy="214.7" r="1.48" fill="#1e6a28"/>
<circle cx="223.9" cy="210.5" r="0.84" fill="#2a7a30"/>
<circle cx="227.1" cy="226.8" r="0.72" fill="#2a7a30"/>
<circle cx="238.5" cy="230.6" r="1.21" fill="#3a9040"/>
<circle cx="232.9" cy="230.4" r="1.08" fill="#a8e090"/>
<circle cx="235.7" cy="207.3" r="1.57" fill="#6ac860"/>
<circle cx="239.5" cy="212.7" r="1.60" fill="#8ad870"/>
<circle cx="237.3" cy="220.5" r="1.20" fill="#a8e090"/>
<circle cx="218.4" cy="220.0" r="1.51" fill="#8ad870"/>
<circle cx="246.6" cy="213.9" r="0.78" fill="#1e6a28"/>
<circle cx="221.5" cy="214.9" r="1.56" fill="#8ad870"/>
<circle cx="240.4" cy="229.9" r="1.03" fill="#3a9040"/>
<circle cx="242.0" cy="218.7" r="0.73" fill="#6ac860"/>
<circle cx="237.9" cy="217.9" r="1.20" fill="#2a7a30"/>
<circle cx="235.9" cy="216.6" r="1.41" fill="#a8e090"/>
<circle cx="240.1" cy="220.7" r="1.38" fill="#3a9040"/>
<circle cx="229.9" cy="212.6" r="1.23" fill="#4aa848"/>
<circle cx="223.8" cy="220.5" r="1.05" fill="#1e6a28"/>
<circle cx="227.1" cy="219.6" r="0.91" fill="#5aba50"/>
<circle cx="247.8" cy="212.7" r="1.12" fill="#3a9040"/>
<circle cx="236.0" cy="214.1" r="1.45" fill="#4aa848"/>
<circle cx="248.5" cy="214.1" r="1.50" fill="#5aba50"/>
<circle cx="236.9" cy="206.5" r="1.53" fill="#8ad870"/>
<circle cx="241.4" cy="210.4" r="1.11" fill="#1e6a28"/>
<circle cx="230.4" cy="224.6" r="0.80" fill="#1e6a28"/>
<circle cx="239.0" cy="223.8" r="0.75" fill="#a8e090"/>
<circle cx="227.9" cy="217.4" r="1.48" fill="#6ac860"/>
<circle cx="226.6" cy="222.2" r="0.72" fill="#6ac860"/>
<circle cx="230.5" cy="223.6" r="1.14" fill="#1e6a28"/>
<circle cx="222.6" cy="221.5" r="0.84" fill="#2a7a30"/>
<circle cx="223.7" cy="210.5" r="1.53" fill="#a8e090"/>
<circle cx="237.0" cy="215.1" r="1.38" fill="#1e6a28"/>
<circle cx="226.1" cy="221.8" r="0.91" fill="#3a9040"/>
<circle cx="241.5" cy="223.0" r="1.51" fill="#2a7a30"/>
<circle cx="242.3" cy="207.8" r="0.83" fill="#2a7a30"/>
<circle cx="222.7" cy="222.3" r="1.16" fill="#a8e090"/>
<circle cx="249.5" cy="219.1" r="1.17" fill="#5aba50"/>
<circle cx="231.8" cy="221.0" r="1.07" fill="#6ac860"/>
<circle cx="228.3" cy="216.9" r="0.86" fill="#3a9040"/>
<circle cx="232.2" cy="213.4" r="0.77" fill="#4aa848"/>
<circle cx="245.2" cy="211.9" r="1.39" fill="#5aba50"/>
<circle cx="237.6" cy="228.8" r="1.34" fill="#3a9040"/>
<circle cx="227.4" cy="216.1" r="0.76" fill="#8ad870"/>
<circle cx="242.8" cy="208.5" r="1.17" fill="#1e6a28"/>
<circle cx="226.0" cy="229.3" r="1.48" fill="#a8e090"/>
<circle cx="243.2" cy="223.5" r="1.39" fill="#5aba50"/>
<circle cx="240.1" cy="214.2" r="0.87" fill="#1e6a28"/>
<circle cx="247.9" cy="221.5" r="1.22" fill="#2a7a30"/>
<circle cx="223.8" cy="228.9" r="1.57" fill="#4aa848"/>
<circle cx="244.4" cy="226.6" r="1.43" fill="#1e6a28"/>
<circle cx="236.9" cy="207.1" r="1.22" fill="#2a7a30"/>
<circle cx="232.6" cy="223.1" r="1.36" fill="#a8e090"/>
<circle cx="221.7" cy="218.2" r="1.18" fill="#2a7a30"/>
<circle cx="234.2" cy="222.9" r="1.26" fill="#5aba50"/>
<circle cx="240.8" cy="222.9" r="1.44" fill="#2a7a30"/>
<circle cx="250.2" cy="220.5" r="1.36" fill="#6ac860"/>
<circle cx="247.1" cy="220.1" r="1.22" fill="#3a9040"/>
<circle cx="232.4" cy="215.0" r="1.48" fill="#5aba50"/>
<circle cx="239.7" cy="220.3" r="1.14" fill="#6ac860"/>
<circle cx="238.6" cy="221.9" r="1.50" fill="#3a9040"/>
<circle cx="241.0" cy="230.5" r="1.06" fill="#5ab858"/>
<circle cx="243.6" cy="235.9" r="1.35" fill="#5ab858"/>
<circle cx="234.8" cy="228.4" r="1.08" fill="#1e7028"/>
<circle cx="228.8" cy="235.0" r="1.22" fill="#2a8034"/>
<circle cx="229.1" cy="234.7" r="1.17" fill="#166020"/>
<circle cx="241.8" cy="227.5" r="1.25" fill="#166020"/>
<circle cx="246.1" cy="233.2" r="1.37" fill="#2a8034"/>
<circle cx="238.0" cy="235.2" r="1.11" fill="#2a8034"/>
<circle cx="242.0" cy="233.4" r="0.86" fill="#3a9a40"/>
<circle cx="236.3" cy="232.0" r="0.71" fill="#5ab858"/>
<circle cx="239.9" cy="227.2" r="1.11" fill="#1e7028"/>
<circle cx="247.4" cy="232.9" r="0.81" fill="#166020"/>
<circle cx="236.7" cy="235.6" r="1.34" fill="#166020"/>
<circle cx="241.4" cy="233.0" r="0.61" fill="#3a9a40"/>
<circle cx="244.1" cy="231.2" r="0.84" fill="#3a9a40"/>
<circle cx="244.7" cy="234.6" r="1.36" fill="#166020"/>
<circle cx="240.8" cy="231.2" r="1.07" fill="#3a9a40"/>
<circle cx="230.0" cy="233.3" r="1.31" fill="#5ab858"/>
<circle cx="232.4" cy="230.8" r="1.19" fill="#166020"/>
<circle cx="236.1" cy="235.3" r="1.16" fill="#3a9a40"/>
<circle cx="234.8" cy="230.2" r="1.17" fill="#5ab858"/>
<circle cx="243.1" cy="230.3" r="0.98" fill="#2a8034"/>
<circle cx="244.8" cy="232.6" r="0.75" fill="#166020"/>
<circle cx="231.2" cy="234.6" r="0.61" fill="#2a8034"/>
<circle cx="244.1" cy="236.2" r="0.86" fill="#2a8034"/>
<circle cx="231.6" cy="232.1" r="1.39" fill="#2a8034"/>
<circle cx="239.7" cy="232.3" r="1.04" fill="#166020"/>
<circle cx="243.5" cy="229.6" r="0.65" fill="#5ab858"/>
<circle cx="241.6" cy="229.4" r="1.21" fill="#166020"/>
<circle cx="239.8" cy="236.8" r="1.19" fill="#3a9a40"/>
<circle cx="229.5" cy="234.0" r="0.71" fill="#3a9a40"/>
<circle cx="229.8" cy="228.9" r="1.26" fill="#166020"/>
<circle cx="247.2" cy="234.6" r="1.34" fill="#5ab858"/>
<circle cx="236.9" cy="235.9" r="1.11" fill="#3a9a40"/>
<circle cx="234.7" cy="232.8" r="0.93" fill="#166020"/>
<circle cx="230.7" cy="230.2" r="1.37" fill="#166020"/>
<circle cx="244.5" cy="235.7" r="0.82" fill="#166020"/>
<circle cx="232.2" cy="230.1" r="0.96" fill="#5ab858"/>
<circle cx="236.3" cy="234.9" r="0.88" fill="#166020"/>
<circle cx="231.0" cy="230.9" r="0.86" fill="#5ab858"/>
<circle cx="233.2" cy="233.9" r="1.03" fill="#3a9a40"/>
<circle cx="231.2" cy="233.2" r="0.79" fill="#2a8034"/>
<circle cx="233.1" cy="236.1" r="1.27" fill="#2a8034"/>
<circle cx="240.2" cy="235.1" r="1.33" fill="#1e7028"/>
<circle cx="244.0" cy="232.4" r="1.32" fill="#2a8034"/>
<circle cx="247.3" cy="229.9" r="1.03" fill="#5ab858"/>
<circle cx="229.4" cy="231.6" r="1.15" fill="#5ab858"/>
<circle cx="235.6" cy="232.2" r="1.14" fill="#5ab858"/>
<circle cx="247.3" cy="230.7" r="1.02" fill="#1e7028"/>
<circle cx="230.8" cy="233.9" r="1.12" fill="#166020"/>
<circle cx="240.9" cy="233.8" r="0.94" fill="#5ab858"/>
<circle cx="229.2" cy="233.5" r="1.40" fill="#2a8034"/>
<circle cx="234.3" cy="228.0" r="0.67" fill="#2a8034"/>
<circle cx="233.1" cy="236.5" r="1.26" fill="#166020"/>
<circle cx="242.4" cy="235.6" r="0.84" fill="#2a8034"/>
<circle cx="243.1" cy="227.5" r="1.31" fill="#5ab858"/>
<circle cx="232.1" cy="229.3" r="1.25" fill="#3a9a40"/>
<circle cx="232.8" cy="231.9" r="0.75" fill="#166020"/>
<circle cx="232.3" cy="230.2" r="1.39" fill="#1e7028"/>
<circle cx="237.6" cy="231.5" r="0.60" fill="#166020"/>
<circle cx="244.6" cy="232.1" r="1.27" fill="#166020"/>
<circle cx="240.1" cy="232.1" r="0.74" fill="#166020"/>
<circle cx="227.8" cy="230.1" r="1.32" fill="#166020"/>
<circle cx="247.1" cy="231.9" r="0.93" fill="#1e7028"/>
<circle cx="243.3" cy="234.8" r="1.01" fill="#1e7028"/>
<circle cx="242.0" cy="233.2" r="1.02" fill="#5ab858"/>
<circle cx="229.8" cy="229.1" r="0.65" fill="#1e7028"/>
<circle cx="234.4" cy="228.5" r="0.72" fill="#3a9a40"/>
<circle cx="235.0" cy="233.6" r="0.81" fill="#1e7028"/>
<circle cx="245.4" cy="228.2" r="0.65" fill="#3a9a40"/>
<circle cx="230.9" cy="233.0" r="0.64" fill="#5ab858"/>
<circle cx="227.8" cy="229.6" r="0.95" fill="#166020"/>
<circle cx="238.4" cy="234.4" r="0.73" fill="#166020"/>
<circle cx="242.1" cy="229.8" r="1.32" fill="#5ab858"/>
<circle cx="234.9" cy="235.7" r="1.37" fill="#5ab858"/>
<circle cx="241.1" cy="231.8" r="1.14" fill="#166020"/>
<circle cx="239.2" cy="234.7" r="1.30" fill="#5ab858"/>
<circle cx="249.1" cy="232.7" r="0.67" fill="#3a9a40"/>
<circle cx="234.7" cy="233.7" r="1.38" fill="#2a8034"/>
<circle cx="232.3" cy="233.8" r="0.87" fill="#5ab858"/>
<circle cx="216.7" cy="235.2" r="1.27" fill="#3a8a40"/>
<circle cx="222.2" cy="227.8" r="0.77" fill="#1e6a28"/>
<circle cx="215.4" cy="231.7" r="0.90" fill="#2a7a30"/>
<circle cx="217.6" cy="228.0" r="0.71" fill="#1e6a28"/>
<circle cx="223.5" cy="232.7" r="1.18" fill="#1e6a28"/>
<circle cx="214.9" cy="229.6" r="1.16" fill="#1e6a28"/>
<circle cx="222.6" cy="234.0" r="1.11" fill="#3a8a40"/>
<circle cx="215.8" cy="227.7" r="0.81" fill="#3a8a40"/>
<circle cx="216.2" cy="230.9" r="0.92" fill="#1e6a28"/>
<circle cx="227.5" cy="228.9" r="1.02" fill="#3a8a40"/>
<circle cx="215.9" cy="229.1" r="0.77" fill="#1e6a28"/>
<circle cx="224.9" cy="234.7" r="1.07" fill="#0e4a18"/>
<circle cx="216.0" cy="230.2" r="1.14" fill="#3a8a40"/>
<circle cx="226.7" cy="231.9" r="0.70" fill="#0e4a18"/>
<circle cx="218.2" cy="232.1" r="0.72" fill="#1e6a28"/>
<circle cx="217.2" cy="235.4" r="0.68" fill="#2a7a30"/>
<circle cx="222.4" cy="226.1" r="0.73" fill="#2a7a30"/>
<circle cx="223.7" cy="232.7" r="1.17" fill="#3a8a40"/>
<circle cx="219.0" cy="234.7" r="1.24" fill="#1e6a28"/>
<circle cx="223.1" cy="230.0" r="0.86" fill="#2a7a30"/>
<circle cx="221.0" cy="230.4" r="1.09" fill="#3a8a40"/>
<circle cx="220.1" cy="236.5" r="0.85" fill="#0e4a18"/>
<circle cx="221.1" cy="232.9" r="1.24" fill="#1e6a28"/>
<circle cx="219.6" cy="229.8" r="0.63" fill="#1e6a28"/>
<circle cx="213.7" cy="233.2" r="0.71" fill="#0e4a18"/>
<circle cx="214.0" cy="229.5" r="1.26" fill="#1e6a28"/>
<circle cx="213.9" cy="228.8" r="0.78" fill="#3a8a40"/>
<circle cx="217.1" cy="227.0" r="1.25" fill="#0e4a18"/>
<circle cx="223.6" cy="226.4" r="0.80" fill="#0e4a18"/>
<circle cx="224.3" cy="227.8" r="1.09" fill="#1e6a28"/>
<circle cx="219.4" cy="230.0" r="0.82" fill="#2a7a30"/>
<circle cx="220.0" cy="229.2" r="1.09" fill="#3a8a40"/>
<circle cx="226.3" cy="230.9" r="0.75" fill="#0e4a18"/>
<circle cx="215.5" cy="235.8" r="0.91" fill="#2a7a30"/>
<circle cx="217.5" cy="226.2" r="1.18" fill="#3a8a40"/>
<circle cx="213.4" cy="230.7" r="0.74" fill="#1e6a28"/>
<circle cx="216.5" cy="231.2" r="1.27" fill="#2a7a30"/>
<circle cx="221.5" cy="233.2" r="1.15" fill="#1e6a28"/>
<circle cx="216.2" cy="230.2" r="0.64" fill="#2a7a30"/>
<circle cx="218.6" cy="232.5" r="1.05" fill="#1e6a28"/>
<circle cx="224.4" cy="234.8" r="1.07" fill="#1e6a28"/>
<circle cx="219.8" cy="230.6" r="1.08" fill="#1e6a28"/>
<circle cx="224.4" cy="229.6" r="0.81" fill="#1e6a28"/>
<circle cx="216.7" cy="229.5" r="1.04" fill="#0e4a18"/>
<circle cx="213.3" cy="229.4" r="0.72" fill="#1e6a28"/>
<circle cx="215.6" cy="228.6" r="1.14" fill="#1e6a28"/>
<circle cx="223.2" cy="233.1" r="0.85" fill="#1e6a28"/>
<circle cx="227.3" cy="232.5" r="0.81" fill="#0e4a18"/>
<circle cx="218.4" cy="227.2" r="0.68" fill="#2a7a30"/>
<circle cx="214.3" cy="232.5" r="0.80" fill="#0e4a18"/>
<circle cx="225.3" cy="232.2" r="1.29" fill="#3a8a40"/>
<circle cx="225.9" cy="233.6" r="1.29" fill="#2a7a30"/>
<circle cx="224.3" cy="233.6" r="0.90" fill="#1e6a28"/>
<circle cx="221.0" cy="227.7" r="0.85" fill="#0e4a18"/>
<circle cx="216.1" cy="227.3" r="1.25" fill="#2a7a30"/>
<circle cx="218.7" cy="229.6" r="1.12" fill="#0e4a18"/>
<circle cx="221.1" cy="225.6" r="0.81" fill="#1e6a28"/>
<circle cx="225.6" cy="230.0" r="1.23" fill="#1e6a28"/>
<circle cx="225.4" cy="234.0" r="0.82" fill="#2a7a30"/>
<circle cx="215.3" cy="234.3" r="0.85" fill="#1e6a28"/>
<circle cx="226.0" cy="229.5" r="0.82" fill="#8aa6a6"/>
<circle cx="232.2" cy="227.3" r="0.94" fill="#5a7a70"/>
<circle cx="241.7" cy="222.5" r="0.90" fill="#5a7a70"/>
<circle cx="230.6" cy="219.6" r="0.96" fill="#7a9a98"/>
<circle cx="235.6" cy="228.4" r="0.68" fill="#5a7a70"/>
<circle cx="234.0" cy="226.7" r="0.86" fill="#6a8a86"/>
<circle cx="233.5" cy="229.9" r="0.62" fill="#4a8a58"/>
<circle cx="238.5" cy="221.5" r="0.86" fill="#8aa6a6"/>
<circle cx="234.5" cy="226.7" r="1.03" fill="#8aa6a6"/>
<circle cx="233.0" cy="226.2" r="1.17" fill="#6a8a86"/>
<circle cx="236.0" cy="224.5" r="0.78" fill="#5a7a70"/>
<circle cx="235.3" cy="221.0" r="0.94" fill="#5a7a70"/>
<circle cx="237.9" cy="227.9" r="0.88" fill="#4a8a58"/>
<circle cx="241.4" cy="222.7" r="1.18" fill="#4a8a58"/>
<circle cx="224.1" cy="222.0" r="0.64" fill="#8aa6a6"/>
<circle cx="226.9" cy="223.8" r="0.94" fill="#8aa6a6"/>
<circle cx="222.4" cy="226.6" r="0.78" fill="#8aa6a6"/>
<circle cx="222.6" cy="225.0" r="1.11" fill="#6a8a86"/>
<circle cx="228.5" cy="222.1" r="0.65" fill="#4a8a58"/>
<circle cx="225.7" cy="229.6" r="0.85" fill="#4a8a58"/>
<circle cx="232.5" cy="230.3" r="0.76" fill="#6a8a86"/>
<circle cx="236.8" cy="231.6" r="0.93" fill="#7a9a98"/>
<circle cx="234.0" cy="231.9" r="0.99" fill="#6a8a86"/>
<circle cx="226.1" cy="225.4" r="0.89" fill="#4a8a58"/>
<circle cx="223.5" cy="227.2" r="1.02" fill="#4a8a58"/>
<circle cx="239.6" cy="223.4" r="1.11" fill="#7a9a98"/>
<circle cx="233.4" cy="223.7" r="0.90" fill="#4a8a58"/>
<circle cx="229.7" cy="220.5" r="0.67" fill="#4a8a58"/>
<circle cx="240.8" cy="229.5" r="0.84" fill="#6a8a86"/>
<circle cx="237.1" cy="225.4" r="0.89" fill="#7a9a98"/>
<circle cx="238.9" cy="230.3" r="0.63" fill="#6a8a86"/>
<circle cx="234.3" cy="226.4" r="1.02" fill="#6a8a86"/>
<circle cx="228.0" cy="226.6" r="0.68" fill="#7a9a98"/>
<circle cx="223.9" cy="221.8" r="0.94" fill="#8aa6a6"/>
<circle cx="237.1" cy="230.9" r="0.80" fill="#7a9a98"/>
<circle cx="233.9" cy="224.0" r="0.82" fill="#4a8a58"/>
<circle cx="241.7" cy="224.2" r="0.63" fill="#4a8a58"/>
<circle cx="227.7" cy="229.1" r="0.80" fill="#4a8a58"/>
<circle cx="240.8" cy="230.1" r="1.01" fill="#8aa6a6"/>
<circle cx="225.9" cy="230.3" r="0.61" fill="#4a8a58"/>
<circle cx="222.1" cy="228.1" r="0.89" fill="#7a9a98"/>
<circle cx="233.6" cy="223.3" r="0.93" fill="#8aa6a6"/>
<circle cx="238.9" cy="222.2" r="1.10" fill="#4a8a58"/>
<circle cx="238.2" cy="222.6" r="1.01" fill="#8aa6a6"/>
<circle cx="233.3" cy="225.8" r="0.81" fill="#6a8a86"/>
<circle cx="223.7" cy="226.4" r="0.62" fill="#7a9a98"/>
<circle cx="240.4" cy="228.3" r="0.99" fill="#4a8a58"/>
<circle cx="225.5" cy="228.8" r="0.69" fill="#5a7a70"/>
<circle cx="223.2" cy="229.8" r="0.97" fill="#7a9a98"/>
<circle cx="226.4" cy="229.6" r="0.79" fill="#6a8a86"/>
<circle cx="229.9" cy="225.3" r="0.70" fill="#8aa6a6"/>
<circle cx="231.0" cy="222.3" r="0.88" fill="#8aa6a6"/>
<circle cx="229.3" cy="229.5" r="0.89" fill="#6a8a86"/>
<circle cx="240.1" cy="226.6" r="1.19" fill="#7a9a98"/>
<circle cx="225.0" cy="221.9" r="0.69" fill="#5a7a70"/>
<circle cx="230.8" cy="230.5" r="0.76" fill="#4a8a58"/>
<circle cx="223.8" cy="223.8" r="0.68" fill="#7a9a98"/>
<circle cx="241.8" cy="222.9" r="0.66" fill="#6a8a86"/>
<circle cx="233.5" cy="220.9" r="0.98" fill="#8aa6a6"/>
<circle cx="234.8" cy="220.4" r="0.74" fill="#6a8a86"/>
<circle cx="229.2" cy="222.7" r="1.06" fill="#8aa6a6"/>
<circle cx="222.5" cy="225.7" r="0.81" fill="#4a8a58"/>
<circle cx="230.5" cy="222.3" r="1.02" fill="#8aa6a6"/>
<circle cx="239.9" cy="222.2" r="0.90" fill="#6a8a86"/>
<circle cx="236.4" cy="220.0" r="0.69" fill="#6a8a86"/>
<circle cx="243.2" cy="226.3" r="0.87" fill="#5a7a70"/>
<circle cx="223.6" cy="229.5" r="1.16" fill="#4a8a58"/>
<circle cx="238.0" cy="227.4" r="0.79" fill="#4a8a58"/>
<circle cx="221.0" cy="224.0" r="0.80" fill="#6a8a86"/>
<circle cx="229.1" cy="225.1" r="0.71" fill="#4a8a58"/>
<circle cx="227.0" cy="229.5" r="1.18" fill="#5a7a70"/>
<circle cx="229.9" cy="219.9" r="1.10" fill="#8aa6a6"/>
<circle cx="237.1" cy="224.0" r="0.75" fill="#7a9a98"/>
<circle cx="232.5" cy="220.9" r="0.74" fill="#7a9a98"/>
<circle cx="233.5" cy="230.0" r="0.72" fill="#4a8a58"/>
<circle cx="230.3" cy="230.5" r="0.66" fill="#6a8a86"/>
<circle cx="230.8" cy="219.7" r="0.96" fill="#7a9a98"/>
<circle cx="241.7" cy="228.6" r="0.95" fill="#6a8a86"/>
<circle cx="238.2" cy="226.1" r="0.99" fill="#7a9a98"/>
<circle cx="224.6" cy="221.2" r="0.73" fill="#8aa6a6"/>
<circle cx="233.3" cy="225.2" r="0.89" fill="#4a8a58"/>
<circle cx="229.0" cy="222.6" r="0.63" fill="#5a7a70"/>
<circle cx="233.0" cy="224.2" r="0.97" fill="#5a7a70"/>
<circle cx="239.6" cy="225.7" r="1.16" fill="#7a9a98"/>
<circle cx="238.7" cy="226.6" r="0.99" fill="#8aa6a6"/>
<circle cx="240.8" cy="227.8" r="1.03" fill="#8aa6a6"/>
<circle cx="232.9" cy="226.7" r="0.73" fill="#4a8a58"/>
<circle cx="232.4" cy="224.1" r="1.09" fill="#5a7a70"/>
<circle cx="226.5" cy="230.5" r="1.12" fill="#6a8a86"/>
<circle cx="226.9" cy="221.8" r="0.80" fill="#4a8a58"/>
<ellipse cx="212" cy="227" rx="2.5" ry="0.9" fill="#1e6a28" transform="rotate(-30 212 227)"/>
<ellipse cx="213" cy="233" rx="2.5" ry="0.9" fill="#1e6a28" transform="rotate(10 213 233)"/>
<ellipse cx="215" cy="236" rx="2.5" ry="0.9" fill="#1e6a28" transform="rotate(30 215 236)"/>
<ellipse cx="220" cy="213" rx="2.5" ry="0.9" fill="#1e6a28" transform="rotate(-50 220 213)"/>
<ellipse cx="248" cy="235" rx="2.5" ry="0.9" fill="#1e6a28" transform="rotate(30 248 235)"/>
<ellipse cx="252" cy="222" rx="2.5" ry="0.9" fill="#1e6a28" transform="rotate(0 252 222)"/>
<ellipse cx="251" cy="215" rx="2.5" ry="0.9" fill="#1e6a28" transform="rotate(-60 251 215)"/>
<ellipse cx="228" cy="205.5" rx="2.5" ry="0.9" fill="#1e6a28" transform="rotate(-10 228 205.5)"/>
<path d="M273 228 L273.5 220 L274.5 214 L277 212 L280 213 L283 211.5 L287 212.5 L290 211.5 L294 213 L296 217 L296.5 224 L295.5 229 Z" fill="#d4e2b4"/>
<circle cx="284.0" cy="225.8" r="0.96" fill="#ffffff"/>
<circle cx="279.8" cy="215.0" r="0.92" fill="#ffffff"/>
<circle cx="279.3" cy="223.7" r="0.66" fill="#ffffff"/>
<circle cx="292.1" cy="219.8" r="0.89" fill="#6a8840"/>
<circle cx="289.6" cy="224.3" r="0.74" fill="#a8c070"/>
<circle cx="292.5" cy="217.2" r="0.57" fill="#8aa858"/>
<circle cx="280.1" cy="218.4" r="1.06" fill="#6a8840"/>
<circle cx="283.7" cy="212.4" r="1.02" fill="#f0f6e8"/>
<circle cx="278.1" cy="218.7" r="0.93" fill="#ffffff"/>
<circle cx="292.2" cy="218.9" r="0.88" fill="#6a8840"/>
<circle cx="290.1" cy="216.8" r="0.63" fill="#c8dca0"/>
<circle cx="291.8" cy="223.5" r="0.54" fill="#b8d088"/>
<circle cx="281.5" cy="215.6" r="0.64" fill="#b8d088"/>
<circle cx="275.6" cy="223.4" r="1.07" fill="#8aa858"/>
<circle cx="286.1" cy="219.7" r="0.93" fill="#8aa858"/>
<circle cx="285.1" cy="222.9" r="0.96" fill="#ffffff"/>
<circle cx="281.2" cy="226.6" r="0.63" fill="#f0f6e8"/>
<circle cx="274.0" cy="220.5" r="0.96" fill="#f0f6e8"/>
<circle cx="287.1" cy="215.9" r="0.70" fill="#ffffff"/>
<circle cx="288.3" cy="216.8" r="0.69" fill="#ffffff"/>
<circle cx="285.1" cy="221.2" r="0.97" fill="#6a8840"/>
<circle cx="293.8" cy="221.4" r="0.76" fill="#b8d088"/>
<circle cx="291.7" cy="213.9" r="0.68" fill="#c8dca0"/>
<circle cx="286.0" cy="216.7" r="1.05" fill="#f0f6e8"/>
<circle cx="288.1" cy="218.0" r="0.94" fill="#a8c070"/>
<circle cx="284.6" cy="214.4" r="0.74" fill="#b8d088"/>
<circle cx="278.9" cy="225.6" r="0.93" fill="#6a8840"/>
<circle cx="286.5" cy="219.3" r="0.64" fill="#c8dca0"/>
<circle cx="292.1" cy="220.8" r="0.64" fill="#b8d088"/>
<circle cx="281.5" cy="213.4" r="0.53" fill="#6a8840"/>
<circle cx="287.9" cy="220.5" r="1.07" fill="#f0f6e8"/>
<circle cx="283.9" cy="219.4" r="0.63" fill="#f0f6e8"/>
<circle cx="279.1" cy="215.4" r="1.10" fill="#6a8840"/>
<circle cx="290.2" cy="213.3" r="0.55" fill="#8aa858"/>
<circle cx="291.0" cy="213.6" r="0.63" fill="#a8c070"/>
<circle cx="283.8" cy="222.6" r="0.66" fill="#a8c070"/>
<circle cx="289.3" cy="218.8" r="0.53" fill="#6a8840"/>
<circle cx="283.8" cy="223.8" r="0.52" fill="#ffffff"/>
<circle cx="276.7" cy="218.0" r="0.91" fill="#ffffff"/>
<circle cx="279.5" cy="222.0" r="0.75" fill="#f0f6e8"/>
<circle cx="279.3" cy="222.5" r="0.75" fill="#f0f6e8"/>
<circle cx="291.5" cy="215.9" r="0.64" fill="#ffffff"/>
<circle cx="281.2" cy="213.5" r="1.09" fill="#8aa858"/>
<circle cx="282.8" cy="217.6" r="0.87" fill="#c8dca0"/>
<circle cx="286.6" cy="218.6" r="0.92" fill="#6a8840"/>
<circle cx="281.6" cy="214.9" r="0.90" fill="#ffffff"/>
<circle cx="284.8" cy="219.5" r="0.95" fill="#ffffff"/>
<circle cx="276.1" cy="219.1" r="1.10" fill="#8aa858"/>
<circle cx="288.9" cy="213.6" r="1.02" fill="#6a8840"/>
<circle cx="282.9" cy="214.9" r="0.82" fill="#6a8840"/>
<circle cx="293.3" cy="222.4" r="0.90" fill="#ffffff"/>
<circle cx="283.7" cy="226.4" r="1.01" fill="#6a8840"/>
<circle cx="277.0" cy="218.8" r="0.63" fill="#f0f6e8"/>
<circle cx="293.3" cy="222.1" r="0.72" fill="#8aa858"/>
<circle cx="274.7" cy="218.3" r="0.64" fill="#f0f6e8"/>
<circle cx="289.6" cy="224.5" r="0.61" fill="#c8dca0"/>
<circle cx="281.6" cy="223.6" r="1.02" fill="#b8d088"/>
<circle cx="287.6" cy="221.6" r="0.65" fill="#a8c070"/>
<circle cx="278.6" cy="224.1" r="0.81" fill="#ffffff"/>
<circle cx="281.4" cy="220.2" r="0.74" fill="#ffffff"/>
<circle cx="282.0" cy="214.8" r="0.79" fill="#f0f6e8"/>
<circle cx="284.7" cy="216.6" r="0.91" fill="#6a8840"/>
<circle cx="275.6" cy="219.9" r="0.87" fill="#6a8840"/>
<circle cx="286.3" cy="215.9" r="0.83" fill="#c8dca0"/>
<circle cx="282.1" cy="218.7" r="0.61" fill="#ffffff"/>
<circle cx="289.3" cy="217.6" r="0.66" fill="#ffffff"/>
<circle cx="291.9" cy="222.7" r="1.02" fill="#8aa858"/>
<circle cx="292.0" cy="224.8" r="0.67" fill="#6a8840"/>
<circle cx="292.7" cy="216.5" r="0.73" fill="#c8dca0"/>
<circle cx="283.1" cy="215.5" r="0.74" fill="#ffffff"/>
<circle cx="280.4" cy="223.2" r="0.85" fill="#8aa858"/>
<circle cx="294.6" cy="218.5" r="0.85" fill="#a8c070"/>
<circle cx="281.3" cy="215.8" r="0.54" fill="#ffffff"/>
<circle cx="278.7" cy="223.2" r="0.80" fill="#c8dca0"/>
<circle cx="290.9" cy="223.0" r="1.06" fill="#b8d088"/>
<circle cx="278.0" cy="222.1" r="1.03" fill="#ffffff"/>
<circle cx="281.3" cy="221.2" r="0.95" fill="#c8dca0"/>
<circle cx="280.0" cy="213.8" r="0.74" fill="#c8dca0"/>
<circle cx="289.8" cy="217.7" r="0.70" fill="#b8d088"/>
<circle cx="285.0" cy="216.9" r="0.63" fill="#a8c070"/>
<circle cx="283.3" cy="219.1" r="0.80" fill="#8aa858"/>
<circle cx="282.1" cy="218.8" r="0.91" fill="#6a8840"/>
<circle cx="281.9" cy="219.7" r="0.91" fill="#b8d088"/>
<circle cx="286.8" cy="217.2" r="0.74" fill="#c8dca0"/>
<circle cx="287.4" cy="217.4" r="0.70" fill="#c8dca0"/>
<circle cx="287.7" cy="224.6" r="0.81" fill="#a8c070"/>
<circle cx="282.4" cy="223.0" r="1.02" fill="#b8d088"/>
<circle cx="277.4" cy="219.2" r="0.53" fill="#ffffff"/>
<circle cx="284.6" cy="224.1" r="0.76" fill="#ffffff"/>
<circle cx="283.1" cy="222.1" r="0.62" fill="#6a8840"/>
<circle cx="292.6" cy="217.0" r="0.93" fill="#f0f6e8"/>
<circle cx="278.0" cy="224.5" r="0.62" fill="#c8dca0"/>
<circle cx="284.4" cy="218.8" r="0.54" fill="#6a8840"/>
<circle cx="289.5" cy="220.3" r="0.76" fill="#8aa858"/>
<circle cx="282.1" cy="213.0" r="0.86" fill="#ffffff"/>
<circle cx="276.7" cy="223.1" r="0.62" fill="#8aa858"/>
<circle cx="291.3" cy="221.3" r="0.88" fill="#c8dca0"/>
<circle cx="291.2" cy="224.8" r="0.99" fill="#ffffff"/>
<circle cx="289.0" cy="226.0" r="0.84" fill="#f0f6e8"/>
<circle cx="275.5" cy="219.6" r="0.90" fill="#ffffff"/>
<circle cx="287.1" cy="214.3" r="0.60" fill="#8aa858"/>
<circle cx="277.0" cy="219.0" r="0.62" fill="#a8c070"/>
<circle cx="291.2" cy="218.0" r="0.90" fill="#ffffff"/>
<circle cx="282.5" cy="214.7" r="0.75" fill="#c8dca0"/>
<circle cx="288.1" cy="218.2" r="0.60" fill="#ffffff"/>
<circle cx="283.1" cy="223.0" r="0.85" fill="#6a8840"/>
<circle cx="282.0" cy="213.4" r="0.69" fill="#ffffff"/>
<circle cx="280.0" cy="225.6" r="0.59" fill="#8aa858"/>
<circle cx="282.9" cy="220.4" r="0.73" fill="#ffffff"/>
<circle cx="285.9" cy="225.0" r="0.56" fill="#ffffff"/>
<circle cx="287.3" cy="222.1" r="0.70" fill="#b8d088"/>
<circle cx="292.0" cy="224.0" r="0.57" fill="#8aa858"/>
<circle cx="295.2" cy="219.3" r="0.82" fill="#ffffff"/>
<circle cx="283.0" cy="219.6" r="0.97" fill="#a8c070"/>
<circle cx="286.3" cy="223.3" r="0.68" fill="#a8c070"/>
<circle cx="286.8" cy="224.4" r="0.96" fill="#8aa858"/>
<circle cx="279.2" cy="217.5" r="0.85" fill="#a8c070"/>
<circle cx="290.8" cy="218.6" r="1.07" fill="#ffffff"/>
<circle cx="290.5" cy="220.8" r="0.77" fill="#8aa858"/>
<circle cx="281.3" cy="223.5" r="0.57" fill="#ffffff"/>
<circle cx="287.9" cy="213.6" r="0.77" fill="#a8c070"/>
<circle cx="286.5" cy="213.9" r="0.78" fill="#c8dca0"/>
<circle cx="292.6" cy="220.9" r="0.75" fill="#f0f6e8"/>
<circle cx="275.8" cy="223.0" r="0.55" fill="#f0f6e8"/>
<circle cx="278.8" cy="224.2" r="0.55" fill="#c8dca0"/>
<circle cx="290.1" cy="213.6" r="0.79" fill="#f0f6e8"/>
<circle cx="284.2" cy="221.9" r="0.64" fill="#f0f6e8"/>
<circle cx="276.4" cy="219.6" r="0.57" fill="#ffffff"/>
<circle cx="284.7" cy="225.2" r="0.53" fill="#ffffff"/>
<circle cx="281.2" cy="222.0" r="0.74" fill="#8aa858"/>
<circle cx="295.0" cy="219.0" r="0.94" fill="#8aa858"/>
<circle cx="285.5" cy="218.9" r="1.07" fill="#ffffff"/>
<circle cx="286.9" cy="213.4" r="0.63" fill="#8aa858"/>
<circle cx="288.4" cy="221.1" r="1.00" fill="#c8dca0"/>
<circle cx="276.8" cy="222.2" r="0.57" fill="#a8c070"/>
<circle cx="291.7" cy="222.4" r="0.64" fill="#c8dca0"/>
<circle cx="285.8" cy="217.7" r="0.70" fill="#a8c070"/>
<circle cx="292.9" cy="221.0" r="0.92" fill="#ffffff"/>
<circle cx="279.1" cy="225.2" r="0.78" fill="#f0f6e8"/>
<circle cx="295.1" cy="220.0" r="0.75" fill="#b8d088"/>
<path d="M275 229 L275.5 214" stroke="#7a9850" stroke-width="0.5"/>
<path d="M277.5 229 L278.0 214" stroke="#7a9850" stroke-width="0.5"/>
<path d="M280 229 L280.5 214" stroke="#7a9850" stroke-width="0.5"/>
<path d="M283 229 L283.5 214" stroke="#7a9850" stroke-width="0.5"/>
<path d="M286 229 L286.5 214" stroke="#7a9850" stroke-width="0.5"/>
<path d="M289 229 L289.5 214" stroke="#7a9850" stroke-width="0.5"/>
<path d="M291.5 229 L292.0 214" stroke="#7a9850" stroke-width="0.5"/>
<path d="M294 229 L294.5 214" stroke="#7a9850" stroke-width="0.5"/>
<ellipse cx="284.5" cy="229.2" rx="11" ry="2.8" fill="#a870b8"/>
<circle cx="294.1" cy="229.3" r="0.59" fill="#6a8a50"/>
<circle cx="282.6" cy="227.9" r="0.71" fill="#9058a8"/>
<circle cx="287.5" cy="231.2" r="0.91" fill="#b070c0"/>
<circle cx="294.3" cy="228.8" r="0.79" fill="#8050a0"/>
<circle cx="278.3" cy="228.6" r="0.54" fill="#6a8a50"/>
<circle cx="281.3" cy="227.9" r="0.88" fill="#c890d0"/>
<circle cx="285.3" cy="228.0" r="0.93" fill="#c890d0"/>
<circle cx="275.9" cy="227.6" r="0.80" fill="#8050a0"/>
<circle cx="291.1" cy="230.6" r="1.06" fill="#b070c0"/>
<circle cx="284.2" cy="226.4" r="0.98" fill="#6a8a50"/>
<circle cx="288.0" cy="230.2" r="0.88" fill="#6a8a50"/>
<circle cx="281.2" cy="231.2" r="0.82" fill="#b070c0"/>
<circle cx="293.4" cy="229.8" r="0.98" fill="#9058a8"/>
<circle cx="285.0" cy="230.8" r="0.84" fill="#8050a0"/>
<circle cx="275.0" cy="227.7" r="1.03" fill="#b070c0"/>
<circle cx="276.9" cy="230.2" r="0.98" fill="#c890d0"/>
<circle cx="287.7" cy="227.3" r="0.55" fill="#c890d0"/>
<circle cx="279.1" cy="226.7" r="0.76" fill="#c890d0"/>
<circle cx="292.2" cy="228.9" r="0.51" fill="#b070c0"/>
<circle cx="290.0" cy="227.6" r="0.75" fill="#c890d0"/>
<circle cx="278.4" cy="229.2" r="0.63" fill="#c890d0"/>
<circle cx="278.6" cy="229.9" r="0.52" fill="#c890d0"/>
<circle cx="289.4" cy="229.5" r="0.92" fill="#8050a0"/>
<circle cx="277.8" cy="229.8" r="0.65" fill="#9058a8"/>
<circle cx="283.6" cy="228.3" r="0.99" fill="#9058a8"/>
<circle cx="279.6" cy="229.8" r="0.59" fill="#9058a8"/>
<circle cx="286.2" cy="231.2" r="0.87" fill="#8050a0"/>
<circle cx="282.3" cy="230.2" r="1.03" fill="#6a8a50"/>
<circle cx="288.2" cy="231.0" r="0.60" fill="#6a8a50"/>
<circle cx="294.6" cy="228.9" r="0.56" fill="#9058a8"/>
<circle cx="275.0" cy="229.5" r="0.65" fill="#c890d0"/>
<circle cx="279.6" cy="226.5" r="0.94" fill="#6a8a50"/>
<circle cx="282.5" cy="228.0" r="0.95" fill="#c890d0"/>
<circle cx="283.0" cy="228.2" r="0.87" fill="#8050a0"/>
<circle cx="283.9" cy="230.2" r="0.68" fill="#8050a0"/>
<circle cx="293.6" cy="227.9" r="0.54" fill="#8050a0"/>
<circle cx="275.4" cy="228.9" r="0.51" fill="#b070c0"/>
<circle cx="277.6" cy="228.2" r="0.95" fill="#9058a8"/>
<circle cx="283.2" cy="226.6" r="0.52" fill="#c890d0"/>
<circle cx="283.6" cy="228.8" r="1.06" fill="#c890d0"/>
<circle cx="289.7" cy="230.4" r="0.85" fill="#b070c0"/>
<circle cx="289.1" cy="228.8" r="0.85" fill="#c890d0"/>
<circle cx="280.7" cy="227.9" r="0.96" fill="#b070c0"/>
<circle cx="274.9" cy="230.0" r="0.89" fill="#8050a0"/>
<circle cx="273.7" cy="228.9" r="0.72" fill="#c890d0"/>
<circle cx="280.0" cy="230.9" r="0.80" fill="#b070c0"/>
<circle cx="286.3" cy="227.3" r="0.58" fill="#6a8a50"/>
<circle cx="285.5" cy="228.2" r="0.68" fill="#6a8a50"/>
<circle cx="287.4" cy="230.1" r="0.53" fill="#c890d0"/>
<circle cx="294.0" cy="228.4" r="0.72" fill="#9058a8"/>
<ellipse cx="284.5" cy="234.2" rx="11.2" ry="3.2" fill="#2e6a34"/>
<circle cx="283.0" cy="236.8" r="0.78" fill="#4a8a48"/>
<circle cx="290.8" cy="233.2" r="0.91" fill="#4a8a48"/>
<circle cx="279.1" cy="235.2" r="1.08" fill="#4a8a48"/>
<circle cx="292.5" cy="235.9" r="0.87" fill="#0e4a18"/>
<circle cx="278.2" cy="232.0" r="0.69" fill="#3a7a40"/>
<circle cx="283.0" cy="236.2" r="0.90" fill="#0e4a18"/>
<circle cx="284.6" cy="232.4" r="0.72" fill="#0e4a18"/>
<circle cx="278.7" cy="233.7" r="0.88" fill="#4a8a48"/>
<circle cx="283.4" cy="234.1" r="0.82" fill="#4a8a48"/>
<circle cx="278.0" cy="236.3" r="0.66" fill="#3a7a40"/>
<circle cx="292.3" cy="232.2" r="0.56" fill="#0e4a18"/>
<circle cx="289.2" cy="231.8" r="1.06" fill="#3a7a40"/>
<circle cx="277.9" cy="231.7" r="0.88" fill="#1e5a28"/>
<circle cx="285.6" cy="232.1" r="1.06" fill="#4a8a48"/>
<circle cx="278.2" cy="235.2" r="0.70" fill="#3a7a40"/>
<circle cx="283.5" cy="232.9" r="0.94" fill="#0e4a18"/>
<circle cx="279.4" cy="231.5" r="0.58" fill="#4a8a48"/>
<circle cx="280.1" cy="231.4" r="0.54" fill="#1e5a28"/>
<circle cx="289.9" cy="232.0" r="0.85" fill="#0e4a18"/>
<circle cx="286.6" cy="236.5" r="0.97" fill="#3a7a40"/>
<circle cx="289.7" cy="236.0" r="0.95" fill="#1e5a28"/>
<circle cx="292.9" cy="232.3" r="0.95" fill="#0e4a18"/>
<circle cx="287.4" cy="233.2" r="0.92" fill="#0e4a18"/>
<circle cx="280.1" cy="233.0" r="0.54" fill="#4a8a48"/>
<circle cx="276.3" cy="232.2" r="0.69" fill="#4a8a48"/>
<circle cx="279.6" cy="231.4" r="0.98" fill="#4a8a48"/>
<circle cx="292.3" cy="234.3" r="0.57" fill="#4a8a48"/>
<circle cx="286.0" cy="236.0" r="0.96" fill="#0e4a18"/>
<circle cx="284.1" cy="234.7" r="0.77" fill="#1e5a28"/>
<circle cx="294.2" cy="234.7" r="0.57" fill="#3a7a40"/>
<circle cx="281.6" cy="236.8" r="1.08" fill="#3a7a40"/>
<circle cx="286.5" cy="236.6" r="0.63" fill="#1e5a28"/>
<circle cx="285.3" cy="235.2" r="0.99" fill="#4a8a48"/>
<circle cx="282.0" cy="234.3" r="0.88" fill="#1e5a28"/>
<circle cx="278.5" cy="233.0" r="0.81" fill="#0e4a18"/>
<circle cx="286.0" cy="236.8" r="1.10" fill="#4a8a48"/>
<circle cx="290.6" cy="233.6" r="1.09" fill="#1e5a28"/>
<circle cx="279.3" cy="232.2" r="0.76" fill="#0e4a18"/>
<circle cx="287.6" cy="236.2" r="0.57" fill="#3a7a40"/>
<circle cx="283.5" cy="235.3" r="0.94" fill="#1e5a28"/>
<path d="M304.5 231 C304.5 227.5 307 225.5 310.3 225.5 C313.5 225.5 316.3 228 316.2 231.5 C316.2 235 313.5 237.6 310.2 237.6 C307 237.6 304.5 235 304.5 231 Z" fill="#4a8844"/>
<circle cx="308.1" cy="232.4" r="0.82" fill="#6aa060"/>
<circle cx="310.7" cy="229.0" r="0.85" fill="#2a6a30"/>
<circle cx="310.2" cy="226.0" r="0.95" fill="#b8d8b0"/>
<circle cx="309.8" cy="231.0" r="0.61" fill="#98c890"/>
<circle cx="315.3" cy="231.9" r="0.83" fill="#b8d8b0"/>
<circle cx="306.4" cy="230.5" r="0.78" fill="#1e5a28"/>
<circle cx="306.7" cy="227.4" r="0.58" fill="#3a7a38"/>
<circle cx="310.0" cy="226.9" r="0.65" fill="#3a7a38"/>
<circle cx="311.5" cy="227.9" r="0.46" fill="#3a7a38"/>
<circle cx="312.3" cy="228.9" r="0.93" fill="#98c890"/>
<circle cx="315.4" cy="231.2" r="0.88" fill="#98c890"/>
<circle cx="314.6" cy="228.2" r="0.91" fill="#1e5a28"/>
<circle cx="306.8" cy="230.0" r="0.53" fill="#2a6a30"/>
<circle cx="307.4" cy="227.0" r="0.52" fill="#2a6a30"/>
<circle cx="315.3" cy="229.6" r="0.66" fill="#b8d8b0"/>
<circle cx="310.0" cy="229.3" r="0.94" fill="#98c890"/>
<circle cx="310.7" cy="232.0" r="0.53" fill="#1e5a28"/>
<circle cx="309.4" cy="231.3" r="0.89" fill="#3a7a38"/>
<circle cx="309.2" cy="231.8" r="0.93" fill="#1e5a28"/>
<circle cx="314.6" cy="228.8" r="0.60" fill="#1e5a28"/>
<circle cx="313.1" cy="228.9" r="0.78" fill="#6aa060"/>
<circle cx="312.7" cy="231.6" r="0.61" fill="#3a7a38"/>
<circle cx="314.4" cy="234.5" r="0.97" fill="#98c890"/>
<circle cx="306.3" cy="232.7" r="0.78" fill="#b8d8b0"/>
<circle cx="314.3" cy="229.0" r="0.74" fill="#b8d8b0"/>
<circle cx="313.8" cy="232.8" r="0.64" fill="#b8d8b0"/>
<circle cx="313.8" cy="227.2" r="0.83" fill="#98c890"/>
<circle cx="309.0" cy="227.9" r="0.49" fill="#98c890"/>
<circle cx="309.2" cy="230.7" r="0.54" fill="#6aa060"/>
<circle cx="314.4" cy="231.6" r="0.85" fill="#6aa060"/>
<circle cx="307.2" cy="227.9" r="0.42" fill="#3a7a38"/>
<circle cx="312.3" cy="230.1" r="0.40" fill="#98c890"/>
<circle cx="312.8" cy="232.3" r="0.96" fill="#6aa060"/>
<circle cx="310.5" cy="230.3" r="0.73" fill="#1e5a28"/>
<circle cx="312.7" cy="230.1" r="0.49" fill="#3a7a38"/>
<circle cx="305.1" cy="232.2" r="0.86" fill="#b8d8b0"/>
<circle cx="312.0" cy="232.7" r="0.72" fill="#1e5a28"/>
<circle cx="308.5" cy="231.4" r="0.87" fill="#98c890"/>
<circle cx="310.5" cy="231.4" r="0.91" fill="#1e5a28"/>
<circle cx="309.4" cy="230.2" r="0.74" fill="#1e5a28"/>
<circle cx="306.3" cy="228.7" r="0.45" fill="#3a7a38"/>
<circle cx="308.1" cy="227.8" r="0.67" fill="#b8d8b0"/>
<circle cx="315.0" cy="231.7" r="0.41" fill="#1e5a28"/>
<circle cx="311.7" cy="228.0" r="0.47" fill="#b8d8b0"/>
<circle cx="309.9" cy="226.9" r="0.99" fill="#1e5a28"/>
<circle cx="314.2" cy="230.9" r="0.61" fill="#3a7a38"/>
<circle cx="312.5" cy="232.9" r="0.93" fill="#3a7a38"/>
<circle cx="312.7" cy="233.1" r="0.59" fill="#2a6a30"/>
<circle cx="312.8" cy="235.0" r="0.99" fill="#6aa060"/>
<circle cx="311.8" cy="231.6" r="0.47" fill="#b8d8b0"/>
<circle cx="310.6" cy="228.9" r="0.63" fill="#98c890"/>
<circle cx="313.9" cy="229.5" r="0.53" fill="#b8d8b0"/>
<circle cx="310.3" cy="229.9" r="0.41" fill="#3a7a38"/>
<circle cx="310.1" cy="230.5" r="0.81" fill="#98c890"/>
<circle cx="310.7" cy="230.3" r="0.77" fill="#2a6a30"/>
<circle cx="306.1" cy="233.2" r="0.55" fill="#2a6a30"/>
<circle cx="310.8" cy="230.7" r="0.63" fill="#6aa060"/>
<circle cx="305.3" cy="233.4" r="0.79" fill="#98c890"/>
<circle cx="310.7" cy="226.4" r="1.00" fill="#2a6a30"/>
<circle cx="309.9" cy="234.3" r="0.65" fill="#3a7a38"/>
<ellipse cx="337.2" cy="234.6" rx="10.5" ry="3" fill="#2a6a30"/>
<circle cx="333.0" cy="236.1" r="0.71" fill="#4a8a48"/>
<circle cx="346.4" cy="234.2" r="0.64" fill="#4a8a48"/>
<circle cx="339.3" cy="232.1" r="0.56" fill="#4a8a48"/>
<circle cx="331.8" cy="235.0" r="0.54" fill="#1e5a28"/>
<circle cx="341.3" cy="233.9" r="0.82" fill="#3a7a40"/>
<circle cx="343.4" cy="233.5" r="1.05" fill="#1e5a28"/>
<circle cx="334.3" cy="233.1" r="0.95" fill="#1e5a28"/>
<circle cx="335.7" cy="232.3" r="0.57" fill="#3a7a40"/>
<circle cx="330.9" cy="232.7" r="0.60" fill="#4a8a48"/>
<circle cx="337.3" cy="232.7" r="0.65" fill="#1e5a28"/>
<circle cx="345.4" cy="235.7" r="0.88" fill="#3a7a40"/>
<circle cx="332.7" cy="232.3" r="0.92" fill="#4a8a48"/>
<circle cx="345.1" cy="235.4" r="0.82" fill="#1e5a28"/>
<circle cx="334.6" cy="235.1" r="0.57" fill="#0e4a18"/>
<circle cx="332.7" cy="232.5" r="1.03" fill="#0e4a18"/>
<circle cx="338.7" cy="235.1" r="0.68" fill="#0e4a18"/>
<circle cx="335.8" cy="233.0" r="1.09" fill="#1e5a28"/>
<circle cx="341.8" cy="232.6" r="0.69" fill="#3a7a40"/>
<circle cx="346.6" cy="234.7" r="0.64" fill="#3a7a40"/>
<circle cx="340.0" cy="231.9" r="0.67" fill="#1e5a28"/>
<circle cx="338.8" cy="233.5" r="0.55" fill="#4a8a48"/>
<circle cx="334.8" cy="233.1" r="0.59" fill="#1e5a28"/>
<circle cx="338.5" cy="233.6" r="0.65" fill="#1e5a28"/>
<circle cx="332.7" cy="233.6" r="0.54" fill="#1e5a28"/>
<circle cx="336.0" cy="237.1" r="1.06" fill="#4a8a48"/>
<circle cx="331.4" cy="236.1" r="0.58" fill="#4a8a48"/>
<circle cx="334.3" cy="235.1" r="0.90" fill="#3a7a40"/>
<circle cx="340.8" cy="233.5" r="0.96" fill="#1e5a28"/>
<circle cx="338.0" cy="235.5" r="0.63" fill="#0e4a18"/>
<circle cx="340.3" cy="233.0" r="1.04" fill="#4a8a48"/>
<circle cx="338.8" cy="233.7" r="0.90" fill="#4a8a48"/>
<circle cx="337.4" cy="234.7" r="0.76" fill="#1e5a28"/>
<circle cx="343.2" cy="235.6" r="0.80" fill="#0e4a18"/>
<circle cx="342.6" cy="235.6" r="0.60" fill="#3a7a40"/>
<circle cx="334.9" cy="234.5" r="0.61" fill="#4a8a48"/>
<circle cx="332.6" cy="235.8" r="1.06" fill="#1e5a28"/>
<circle cx="341.7" cy="234.8" r="0.95" fill="#0e4a18"/>
<circle cx="345.1" cy="236.1" r="0.81" fill="#3a7a40"/>
<circle cx="329.8" cy="233.9" r="0.69" fill="#1e5a28"/>
<circle cx="341.9" cy="235.0" r="1.05" fill="#0e4a18"/>
<circle cx="338.0" cy="233.1" r="0.98" fill="#4a8a48"/>
<circle cx="341.7" cy="235.1" r="0.97" fill="#1e5a28"/>
<circle cx="344.8" cy="236.2" r="0.79" fill="#3a7a40"/>
<circle cx="328.9" cy="234.1" r="0.99" fill="#1e5a28"/>
<circle cx="331.8" cy="232.2" r="0.52" fill="#3a7a40"/>
<circle cx="338.1" cy="226.2" r="0.48" fill="#a03060"/>
<circle cx="342.2" cy="231.1" r="0.97" fill="#c04a78"/>
<circle cx="340.6" cy="227.3" r="0.94" fill="#d06890"/>
<circle cx="336.6" cy="228.4" r="0.68" fill="#c04a78"/>
<circle cx="328.7" cy="229.7" r="0.57" fill="#d06890"/>
<circle cx="339.8" cy="227.3" r="0.59" fill="#d06890"/>
<circle cx="342.6" cy="228.0" r="0.81" fill="#c04a78"/>
<circle cx="332.8" cy="230.5" r="0.44" fill="#a03060"/>
<circle cx="327.8" cy="228.6" r="0.70" fill="#d06890"/>
<circle cx="333.8" cy="227.8" r="0.90" fill="#d06890"/>
<circle cx="333.9" cy="231.4" r="0.56" fill="#a03060"/>
<circle cx="340.9" cy="229.1" r="0.65" fill="#c04a78"/>
<circle cx="329.4" cy="227.6" r="0.54" fill="#c04a78"/>
<circle cx="341.8" cy="231.2" r="0.76" fill="#e090b0"/>
<circle cx="329.6" cy="227.8" r="0.48" fill="#d06890"/>
<circle cx="332.4" cy="228.2" r="0.65" fill="#d06890"/>
<circle cx="340.5" cy="228.8" r="0.59" fill="#c04a78"/>
<circle cx="340.1" cy="230.6" r="0.45" fill="#e090b0"/>
<circle cx="338.2" cy="227.2" r="0.74" fill="#d06890"/>
<circle cx="342.9" cy="226.4" r="0.56" fill="#e090b0"/>
<circle cx="342.2" cy="230.0" r="0.89" fill="#c04a78"/>
<circle cx="339.1" cy="228.3" r="0.85" fill="#d06890"/>
<circle cx="341.2" cy="227.3" r="0.72" fill="#a03060"/>
<circle cx="339.7" cy="226.4" r="0.71" fill="#c04a78"/>
<circle cx="330.7" cy="229.5" r="0.72" fill="#a03060"/>
<circle cx="344.5" cy="226.9" r="0.52" fill="#c04a78"/>
<circle cx="333.0" cy="227.9" r="0.63" fill="#a03060"/>
<circle cx="333.2" cy="227.2" r="0.97" fill="#a03060"/>
<circle cx="335.9" cy="228.0" r="0.84" fill="#b03a68"/>
<circle cx="335.2" cy="227.5" r="0.60" fill="#c04a78"/>
<circle cx="331.8" cy="229.4" r="0.86" fill="#d06890"/>
<circle cx="331.7" cy="229.2" r="0.98" fill="#e090b0"/>
<circle cx="344.9" cy="230.5" r="0.73" fill="#e090b0"/>
<circle cx="345.8" cy="228.1" r="0.54" fill="#a03060"/>
<circle cx="332.1" cy="230.3" r="0.62" fill="#d06890"/>
<circle cx="331.3" cy="226.5" r="0.47" fill="#b03a68"/>
<circle cx="341.0" cy="230.3" r="0.65" fill="#c04a78"/>
<circle cx="330.7" cy="229.2" r="0.60" fill="#b03a68"/>
<circle cx="332.1" cy="230.9" r="0.66" fill="#d06890"/>
<circle cx="340.0" cy="226.3" r="0.81" fill="#d06890"/>
<circle cx="334.4" cy="229.5" r="0.78" fill="#a03060"/>
<circle cx="340.9" cy="226.6" r="0.78" fill="#b03a68"/>
<circle cx="341.1" cy="228.5" r="0.86" fill="#a03060"/>
<circle cx="334.7" cy="227.8" r="0.44" fill="#e090b0"/>
<circle cx="342.2" cy="226.4" r="0.75" fill="#d06890"/>
<circle cx="342.9" cy="227.3" r="0.65" fill="#b03a68"/>
<circle cx="336.6" cy="229.6" r="0.40" fill="#d06890"/>
<circle cx="341.1" cy="229.6" r="0.50" fill="#d06890"/>
<circle cx="336.2" cy="231.5" r="0.99" fill="#c04a78"/>
<circle cx="339.7" cy="228.9" r="0.45" fill="#d06890"/>
<circle cx="340.3" cy="230.3" r="0.71" fill="#a03060"/>
<circle cx="334.9" cy="231.5" r="0.92" fill="#a03060"/>
<circle cx="339.6" cy="229.1" r="0.50" fill="#c04a78"/>
<circle cx="339.0" cy="229.1" r="0.98" fill="#d06890"/>
<circle cx="339.1" cy="226.2" r="0.61" fill="#e090b0"/>
<circle cx="341.7" cy="230.7" r="0.99" fill="#c04a78"/>
<circle cx="337.1" cy="225.9" r="0.65" fill="#a03060"/>
<circle cx="336.1" cy="227.3" r="0.88" fill="#e090b0"/>
<circle cx="343.0" cy="230.2" r="0.51" fill="#e090b0"/>
<circle cx="339.8" cy="226.1" r="0.54" fill="#c04a78"/></svg>

<div class="lbl" style="left:398px;top:179.5px;font-size:7.6px">Характеристики композиции:</div>
<div class="row g" style="top:199px"><span class="a">Вид композиции:</span><span class="b">Многолетники</span></div>
<div class="row" style="top:213px"><span class="a">Максимальная высота:</span><span class="b">1.2 м</span></div>
<div class="row g" style="top:227px"><span class="a">Условия роста:</span><span class="b">Полутень и влажно</span></div>
<div class="row" style="top:241px"><span class="a">Скорость роста:</span><span class="b">Быстрая, Средняя</span></div>
<div class="row g" style="top:255px"><span class="a">Длина посадочной полосы:</span><span class="b">7 м</span></div>
<div class="row" style="top:269px"><span class="a">Ширина посадочной полосы:</span><span class="b">4 м</span></div>

<div class="lbl" style="left:398.3px;top:292.4px;line-height:8.4px;font-size:7.45px">Изменить размер<br>места посадки:</div>
<div class="abs" style="left:464.7px;top:292.4px;width:8px;height:7.2px;background:#8cb828;border-radius:1.2px;color:#e8f0d0;font-size:5.5px;text-align:center;line-height:7.2px;font-weight:bold">?</div>
<div class="lbl" style="left:583.5px;top:292.2px;font-size:7.45px">Размер композиции:</div>

<div class="txt" style="left:398.3px;top:320.8px">Длина:</div>
<div class="abs" style="left:430.7px;top:320.5px;width:25.8px;height:8.6px;border:0.9px solid #4a7e82;border-radius:5px;font-size:7.4px;text-align:center;line-height:7.6px;color:#2a2a2a">7</div>
<div class="txt" style="left:583.5px;top:320.8px">5.1 м</div>
<div class="txt" style="left:398.3px;top:340.2px">Ширина:</div>
<div class="abs" style="left:430.7px;top:340.3px;width:25.8px;height:8.6px;border:0.9px solid #4a7e82;border-radius:5px;font-size:7.4px;text-align:center;line-height:7.6px;color:#2a2a2a">4</div>
<div class="txt" style="left:583.5px;top:340.2px">3.7 м</div>

<div class="abs" style="left:397.7px;top:372.1px;width:54.5px;height:15.5px;border-radius:8px;background:#e7e7e7;color:#40646a;font-size:6.6px;text-align:center;line-height:16.9px">Применить</div>

<div class="lbl" style="left:73.6px;top:467.1px;color:#30575d;font-size:7.75px">Цвета обводки ярусов:</div>

<!-- bottom bar -->
<div class="abs" style="left:57px;top:476.2px;width:701.5px;height:40px;background:#0a5158"></div>
<div class="abs" style="left:69.5px;top:492px;width:53.4px;height:16px;border-radius:8px;background:#fff;color:#455e62;font-size:6.9px;text-align:center;line-height:16.6px">Сохранить</div>
<div class="bw" style="left:130.6px;top:481.2px">Скачать как:</div>
<div class="bw" style="left:138.4px;top:497px;font-size:7px">pdf</div>
<div class="bw" style="left:164.6px;top:497px;font-size:7px">excel</div>
<div class="bw" style="left:313.8px;top:481.8px;color:#e6eeee">Выбрать сезон:</div>
<div class="abs pill" style="left:314.4px;top:495px;width:44px;background:#8ab833;color:#fff;padding-left:18.1px">Весна</div>
<div class="abs pill" style="left:366.5px;top:495px;width:40.1px;background:#fff;color:#222;padding-left:18.7px">Лето</div>
<div class="abs pill" style="left:414.4px;top:495px;width:45.2px;background:#fff;color:#222;padding-left:18.9px">Осень</div>
<div class="abs btn2" style="left:593.2px;top:492.6px;width:62px;padding-left:20.5px">Панорама</div>
<div class="abs btn2" style="left:666.2px;top:492.6px;width:80px;padding-left:23.2px">В трёх сезонах</div>
<svg class="abs" style="left:0;top:470px" width="815" height="46">
 <g transform="translate(0,-470)">
  <!-- pdf icon -->
  <path d="M133.1 497.4 L131.2 499.6 H132.3 V501 H133.9 V499.6 H135 Z" fill="#e8f0f0"/>
  <path d="M130.8 502.2 H135.4 M130.8 503.5 H135.4" stroke="#e8f0f0" stroke-width="0.7"/>
  <!-- excel icon -->
  <path d="M157.4 497.9 H160.2 L161.8 499.5 V503.4 H157.4 Z" fill="none" stroke="#e8f0f0" stroke-width="0.8"/>
  <circle cx="159.6" cy="501.4" r="0.7" fill="#e8f0f0"/>
  <!-- spring flower -->
  <g fill="#fff"><circle cx="322.7" cy="499.2" r="2.6"/><path d="M319 504.6 C319 502.2 321 502 322.7 502.6 C324.4 502 326.4 502.2 326.4 504.6 Z"/></g>
  <circle cx="322.7" cy="499.2" r="1.1" fill="#8ab833"/>
  <!-- summer sun -->
  <g stroke="#8ab833" stroke-width="0.8"><path d="M375.2 497.4 V503.8 M372 500.6 H378.4 M373 498.4 L377.4 502.8 M377.4 498.4 L373 502.8"/></g>
  <circle cx="375.2" cy="500.6" r="2" fill="#8ab833"/>
  <!-- autumn leaf -->
  <path d="M423.8 497 L425 499.2 L427.6 499.4 L425.8 501.2 L426.4 503.8 L423.8 502.6 L421.2 503.8 L421.8 501.2 L420 499.4 L422.6 499.2 Z" fill="#8ab833"/>
  <!-- panorama icon -->
  <path d="M602.8 497.2 H605.8 L607.7 499.1 V503.2 H602.8 Z" fill="#1a4a50"/>
  <rect x="604" y="500.6" width="2.4" height="1.6" fill="#fff"/>
  <!-- umbrella icon -->
  <path d="M676.6 500.6 C677 498.2 679 497.2 680.5 497.2 C682 497.2 684 498.2 684.3 500.6 Z" fill="#1a4a50"/>
  <path d="M680.5 500.4 V503.4 C680.5 504 679.6 504 679.4 503.4" stroke="#1a4a50" stroke-width="0.8" fill="none"/>
 </g>
</svg>

</body></html>
